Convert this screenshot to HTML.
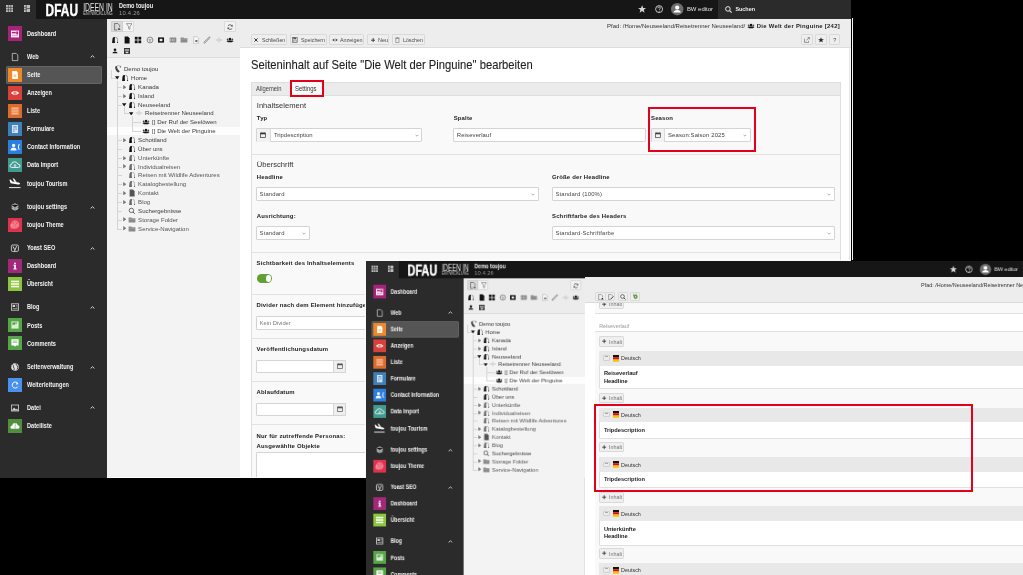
<!DOCTYPE html><html><head><meta charset="utf-8"><style>
*{margin:0;padding:0}
html,body{width:1023px;height:575px;overflow:hidden;background:#000}
body{position:relative;font-family:"Liberation Sans",sans-serif}
.t{position:absolute;white-space:nowrap}
.b{position:absolute;display:block}
.scr{position:absolute;overflow:hidden;will-change:transform}
</style></head><body>
<div class="scr" style="left:0;top:0;width:851px;height:478px"><div class="b" style="left:0.00px;top:0.00px;width:851.00px;height:19.20px;background:#161616"></div>
<div class="b" style="left:0.00px;top:0.00px;width:36.40px;height:19.20px;background:#2b2b2b"></div>
<svg class="b" style="left:5.80px;top:5.20px;" width="7.2" height="7.2" viewBox="0 0 7.2 7.2"><rect x="0" y="0" width="7.2" height="7.2" fill="#bdbdbd"/><path d="M0 2.4H7.2M0 4.8H7.2M2.4 0V7.2M4.8 0V7.2" stroke="#2b2b2b" stroke-width="0.6"/></svg>
<svg class="b" style="left:24.00px;top:5.40px;" width="6.3" height="7" viewBox="0 0 6.3 7"><rect x="0" y="0" width="6.3" height="7" fill="#bdbdbd"/><path d="M2.3 0V7M0 2.3H2.3M0 4.6H2.3M2.3 3.5H6.3" stroke="#2b2b2b" stroke-width="0.6"/></svg>
<svg class="b" style="left:44.50px;top:2.50px;" width="70" height="14" viewBox="0 0 70 14"><text x="0.6" y="12.5" font-family="Liberation Sans" font-weight="700" font-size="16.6" fill="#fff" stroke="#fff" stroke-width="0.45" textLength="32.4" lengthAdjust="spacingAndGlyphs">DFAU</text><text x="38.2" y="7.9" font-family="Liberation Sans" font-weight="400" font-size="10.2" fill="#e0e0e0" textLength="29.5" lengthAdjust="spacingAndGlyphs">IDEEN IN</text><text x="38.2" y="12.3" font-family="Liberation Sans" font-weight="400" font-size="5.1" fill="#cfcfcf" textLength="29.5" lengthAdjust="spacingAndGlyphs">ENTWICKLUNG</text></svg>
<div class="t" style="left:119.00px;top:1.00px;height:10px;line-height:10px;font-size:6.5px;color:#f0f0f0;font-weight:700;transform:scaleX(0.86);transform-origin:0 50%;">Demo toujou</div>
<div class="t" style="left:119.00px;top:7.80px;height:10px;line-height:10px;font-size:5.8px;color:#9a9a9a;font-weight:400;letter-spacing:0.25px;">10.4.26</div>
<div class="b" style="left:718.00px;top:0.00px;width:133.00px;height:18.50px;background:#2b2b2b"></div>
<svg class="b" style="left:638.20px;top:5.30px;" width="8.2" height="8" viewBox="0 0 8.2 8"><path d="M4.1 0.2L5.2 3H8.1L5.8 4.8L6.6 7.7L4.1 6L1.6 7.7L2.4 4.8L0.1 3H3Z" fill="#d6d6d6"/></svg>
<svg class="b" style="left:654.60px;top:5.30px;" width="8.2" height="8.2" viewBox="0 0 8.2 8.2"><circle cx="4.1" cy="4.1" r="3.5" fill="none" stroke="#d6d6d6" stroke-width="0.9"/><path d="M2.8 3.2Q2.9 1.9 4.1 1.9Q5.4 1.9 5.4 3.1Q5.4 3.9 4.3 4.4V5.1" fill="none" stroke="#d6d6d6" stroke-width="0.8"/><circle cx="4.25" cy="6.2" r="0.5" fill="#d6d6d6"/></svg>
<svg class="b" style="left:671.30px;top:3.20px;" width="12.4" height="12.4" viewBox="0 0 12.4 12.4"><circle cx="6.2" cy="6.2" r="6.2" fill="#6e6e6e"/><circle cx="6.2" cy="4.6" r="2.1" fill="#fff"/><path d="M2.6 9.6Q2.8 6.9 6.2 6.9Q9.6 6.9 9.8 9.6Z" fill="#fff"/></svg>
<div class="t" style="left:686.90px;top:4.30px;height:10px;line-height:10px;font-size:5.95px;color:#e4e4e4;font-weight:400;">BW editor</div>
<svg class="b" style="left:725.00px;top:5.70px;" width="7" height="7" viewBox="0 0 7 7"><circle cx="2.9" cy="2.9" r="2.3" fill="none" stroke="#e8e8e8" stroke-width="1"/><path d="M4.6 4.6L6.6 6.6" stroke="#e8e8e8" stroke-width="1.1"/></svg>
<div class="t" style="left:735.40px;top:4.30px;height:10px;line-height:10px;font-size:5.45px;color:#f0f0f0;font-weight:700;">Suchen</div>
<div class="b" style="left:0.00px;top:18.50px;width:107.20px;height:459.50px;background:#2b2b2b"></div>
<div class="b" style="left:5.90px;top:65.90px;width:96.00px;height:18.00px;background:#555;border:0.8px solid #646464;border-radius:1.2px;box-sizing:border-box"></div>
<div class="b" style="left:8.10px;top:26.40px;width:14.20px;height:14.30px;background:#a8217a"></div>
<svg class="b" style="left:8.20px;top:26.60px;" width="14" height="14" viewBox="0 0 14 14"><g transform="translate(7 7)"><rect x="-4" y="-3.4" width="8" height="6.8" fill="#fff"/><rect x="-3.2" y="-2.2" width="4" height="1.6" fill="#a8217a"/><rect x="1.2" y="-2.6" width="2" height="3" fill="#a8217a"/><rect x="-3.2" y="0.6" width="6.4" height="1.6" fill="#e3a9cb"/></g></svg>
<div class="t" style="left:27.20px;top:28.80px;height:10px;line-height:10px;font-size:6.6px;color:#f2f2f2;font-weight:700;transform:scaleX(0.85);transform-origin:0 50%;">Dashboard</div>
<svg class="b" style="left:8.20px;top:49.60px;" width="14" height="14" viewBox="0 0 14 14"><g transform="translate(7 7)"><path d="M-2.7 -3.6H1.2L2.8 -2V3.6H-2.7Z" fill="none" stroke="#e0e0e0" stroke-width="0.7"/></g></svg>
<div class="t" style="left:27.20px;top:51.80px;height:10px;line-height:10px;font-size:6.6px;color:#f2f2f2;font-weight:700;transform:scaleX(0.85);transform-origin:0 50%;">Web</div>
<svg class="b" style="left:90.30px;top:55.30px;" width="5" height="3" viewBox="0 0 5 3"><path d="M0.6 2.5L2.5 0.7L4.4 2.5" fill="none" stroke="#e0e0e0" stroke-width="0.95"/></svg>
<div class="b" style="left:8.10px;top:67.80px;width:14.20px;height:14.30px;background:#f0882a"></div>
<svg class="b" style="left:8.20px;top:68.00px;" width="14" height="14" viewBox="0 0 14 14"><g transform="translate(7 7)"><path d="M-2.8 -3.9H1.4L2.9 -2.4V3.9H-2.8Z" fill="#fff"/><rect x="-1.4" y="-0.4" width="2.6" height="2.4" fill="#f6c7a0"/></g></svg>
<div class="t" style="left:27.20px;top:70.20px;height:10px;line-height:10px;font-size:6.6px;color:#f2f2f2;font-weight:700;transform:scaleX(0.85);transform-origin:0 50%;">Seite</div>
<div class="b" style="left:8.10px;top:85.80px;width:14.20px;height:14.30px;background:#d8403a"></div>
<svg class="b" style="left:8.20px;top:86.00px;" width="14" height="14" viewBox="0 0 14 14"><g transform="translate(7 7)"><path d="M-4.2 0Q0 -4 4.2 0Q0 4 -4.2 0Z" fill="#fff"/><circle cx="0" cy="0" r="1.6" fill="#d8403a"/><circle cx="0" cy="0" r="0.7" fill="#fff"/></g></svg>
<div class="t" style="left:27.20px;top:88.20px;height:10px;line-height:10px;font-size:6.6px;color:#f2f2f2;font-weight:700;transform:scaleX(0.85);transform-origin:0 50%;">Anzeigen</div>
<div class="b" style="left:8.10px;top:103.80px;width:14.20px;height:14.30px;background:#dd6b2e"></div>
<svg class="b" style="left:8.20px;top:104.00px;" width="14" height="14" viewBox="0 0 14 14"><g transform="translate(7 7)"><rect x="-3.6" y="-3.6" width="7.2" height="7.2" fill="#f3b48f"/><path d="M-3.6 -1.2H3.6M-3.6 1.2H3.6" stroke="#dd6b2e" stroke-width="0.6"/></g></svg>
<div class="t" style="left:27.20px;top:106.20px;height:10px;line-height:10px;font-size:6.6px;color:#f2f2f2;font-weight:700;transform:scaleX(0.85);transform-origin:0 50%;">Liste</div>
<div class="b" style="left:8.10px;top:121.80px;width:14.20px;height:14.30px;background:#3f7fba"></div>
<svg class="b" style="left:8.20px;top:122.00px;" width="14" height="14" viewBox="0 0 14 14"><g transform="translate(7 7)"><rect x="-3" y="-4" width="6" height="8" fill="#d5e3f0"/><rect x="-1.8" y="-2.6" width="3.6" height="1" fill="#3f7fba"/><rect x="-1.8" y="-0.4" width="1.4" height="1" fill="#3f7fba"/><rect x="0.4" y="-0.4" width="1.4" height="1" fill="#3f7fba"/><rect x="-1.8" y="1.6" width="1.4" height="1" fill="#3f7fba"/></g></svg>
<div class="t" style="left:27.20px;top:124.20px;height:10px;line-height:10px;font-size:6.6px;color:#f2f2f2;font-weight:700;transform:scaleX(0.85);transform-origin:0 50%;">Formulare</div>
<div class="b" style="left:8.10px;top:139.80px;width:14.20px;height:14.30px;background:#2b7fe0"></div>
<svg class="b" style="left:8.20px;top:140.00px;" width="14" height="14" viewBox="0 0 14 14"><g transform="translate(7 7)"><circle cx="-1.4" cy="-1.6" r="1.6" fill="#fff"/><path d="M-4.4 3.4Q-4.2 0.6 -1.4 0.6Q1.4 0.6 1.6 3.4Z" fill="#fff"/><path d="M4.2 -3Q2.4 0 4.2 3" fill="none" stroke="#fff" stroke-width="1"/></g></svg>
<div class="t" style="left:27.20px;top:142.20px;height:10px;line-height:10px;font-size:6.6px;color:#f2f2f2;font-weight:700;transform:scaleX(0.85);transform-origin:0 50%;">Contact Information</div>
<div class="b" style="left:8.10px;top:158.00px;width:14.20px;height:14.30px;background:#3f9c8f"></div>
<svg class="b" style="left:8.20px;top:158.20px;" width="14" height="14" viewBox="0 0 14 14"><g transform="translate(7 7)"><path d="M-3.6 2.4Q-5 2.4 -5 0.9Q-5 -0.6 -3.4 -0.6Q-3.2 -3.2 -0.4 -3.2Q2 -3.2 2.6 -1Q5 -1 5 0.9Q5 2.4 3.5 2.4Z" fill="none" stroke="#fff" stroke-width="0.9"/><path d="M0 -0.4V2M-1.1 0.7L0 -0.5L1.1 0.7" fill="none" stroke="#fff" stroke-width="0.8"/></g></svg>
<div class="t" style="left:27.20px;top:160.40px;height:10px;line-height:10px;font-size:6.6px;color:#f2f2f2;font-weight:700;transform:scaleX(0.85);transform-origin:0 50%;">Data Import</div>
<svg class="b" style="left:8.20px;top:176.40px;" width="14" height="14" viewBox="0 0 14 14"><g transform="translate(7 7)"><path d="M-6 4.6H5.5" stroke="#fff" stroke-width="0.9"/><path d="M-5.6 -3.2L-4.4 -3.4L-2.6 -1.6L3.6 -0.6Q5.6 0 5 1Q4.6 1.6 3 1.4L-4.4 0.2Z" fill="#fff"/><path d="M-2.4 -4.4L-1 -4.4L1.6 -1L-0.6 -1.2Z" fill="#fff"/></g></svg>
<div class="t" style="left:27.20px;top:178.60px;height:10px;line-height:10px;font-size:6.6px;color:#f2f2f2;font-weight:700;transform:scaleX(0.85);transform-origin:0 50%;">toujou Tourism</div>
<svg class="b" style="left:8.20px;top:199.80px;" width="14" height="14" viewBox="0 0 14 14"><g transform="translate(7 7)"><path d="M0 -3.8L3.3 -1.9V1.9L0 3.8L-3.3 1.9V-1.9Z" fill="#bdbdbd"/><path d="M-3.3 -1.9L0 0L3.3 -1.9M0 0V3.8M-1.6 -2.8L1.6 -1M1.6 -2.8L-1.6 -1M-3.3 0.2L-1.6 1.1M3.3 0.2L1.6 1.1" stroke="#2b2b2b" stroke-width="0.45"/></g></svg>
<div class="t" style="left:27.20px;top:202.00px;height:10px;line-height:10px;font-size:6.6px;color:#f2f2f2;font-weight:700;transform:scaleX(0.85);transform-origin:0 50%;">toujou settings</div>
<svg class="b" style="left:90.30px;top:205.50px;" width="5" height="3" viewBox="0 0 5 3"><path d="M0.6 2.5L2.5 0.7L4.4 2.5" fill="none" stroke="#e0e0e0" stroke-width="0.95"/></svg>
<div class="b" style="left:8.10px;top:217.60px;width:14.20px;height:14.30px;background:#e0324c"></div>
<svg class="b" style="left:8.20px;top:217.80px;" width="14" height="14" viewBox="0 0 14 14"><g transform="translate(7 7)"><path d="M-3.6 1.5Q-4.2 -4 0 -4.1Q4.2 -4 3.6 1.5M-2.6 3Q-3.2 -2.9 0 -3Q3.2 -2.9 2.7 2.6M-1.6 3.7Q-2.2 -1.8 0 -1.9Q2.2 -1.8 1.8 3.4M-0.6 3.9Q-0.9 -0.8 0 -0.8Q0.9 -0.8 0.8 3.6M-4 -0.8Q-4.4 2.8 -3.2 3.6" fill="none" stroke="#f9d0d6" stroke-width="0.55"/></g></svg>
<div class="t" style="left:27.20px;top:220.00px;height:10px;line-height:10px;font-size:6.6px;color:#f2f2f2;font-weight:700;transform:scaleX(0.85);transform-origin:0 50%;">toujou Theme</div>
<svg class="b" style="left:8.20px;top:240.80px;" width="14" height="14" viewBox="0 0 14 14"><g transform="translate(7 7)"><rect x="-3.6" y="-3" width="7" height="6.4" rx="1.2" fill="none" stroke="#e6e6e6" stroke-width="0.8"/><path d="M-2 -1.6L-0.4 1.6M1.6 -1.8L-0.6 3.4" fill="none" stroke="#e6e6e6" stroke-width="0.9"/></g></svg>
<div class="t" style="left:27.20px;top:243.00px;height:10px;line-height:10px;font-size:6.6px;color:#f2f2f2;font-weight:700;transform:scaleX(0.85);transform-origin:0 50%;">Yoast SEO</div>
<svg class="b" style="left:90.30px;top:246.50px;" width="5" height="3" viewBox="0 0 5 3"><path d="M0.6 2.5L2.5 0.7L4.4 2.5" fill="none" stroke="#e0e0e0" stroke-width="0.95"/></svg>
<div class="b" style="left:8.10px;top:259.00px;width:14.20px;height:14.30px;background:#a2287a"></div>
<svg class="b" style="left:8.20px;top:259.20px;" width="14" height="14" viewBox="0 0 14 14"><g transform="translate(7 7)"><circle cx="0" cy="-2.6" r="0.9" fill="#fff"/><path d="M-1.6 -1.2H0.9V2.6H1.6V3.6H-1.6V2.6H-0.8V-0.2H-1.6Z" fill="#fff"/></g></svg>
<div class="t" style="left:27.20px;top:261.40px;height:10px;line-height:10px;font-size:6.6px;color:#f2f2f2;font-weight:700;transform:scaleX(0.85);transform-origin:0 50%;">Dashboard</div>
<div class="b" style="left:8.10px;top:277.00px;width:14.20px;height:14.30px;background:#8cc63f"></div>
<svg class="b" style="left:8.20px;top:277.20px;" width="14" height="14" viewBox="0 0 14 14"><g transform="translate(7 7)"><rect x="-4" y="-3.3" width="8" height="1.5" fill="#fff"/><rect x="-4" y="-0.75" width="8" height="1.5" fill="#fff"/><rect x="-4" y="1.8" width="8" height="1.5" fill="#fff"/></g></svg>
<div class="t" style="left:27.20px;top:279.40px;height:10px;line-height:10px;font-size:6.6px;color:#f2f2f2;font-weight:700;transform:scaleX(0.85);transform-origin:0 50%;">Übersicht</div>
<svg class="b" style="left:8.20px;top:300.20px;" width="14" height="14" viewBox="0 0 14 14"><g transform="translate(7 7)"><rect x="-3.6" y="-3.2" width="7.2" height="6.4" fill="none" stroke="#d6d6d6" stroke-width="0.8"/><rect x="-2.4" y="-2" width="2.4" height="2" fill="#d6d6d6"/><path d="M0.8 -1.6H2.6M0.8 0H2.6M-2.4 1.6H2.6" stroke="#d6d6d6" stroke-width="0.6"/></g></svg>
<div class="t" style="left:27.20px;top:302.40px;height:10px;line-height:10px;font-size:6.6px;color:#f2f2f2;font-weight:700;transform:scaleX(0.85);transform-origin:0 50%;">Blog</div>
<svg class="b" style="left:90.30px;top:305.90px;" width="5" height="3" viewBox="0 0 5 3"><path d="M0.6 2.5L2.5 0.7L4.4 2.5" fill="none" stroke="#e0e0e0" stroke-width="0.95"/></svg>
<div class="b" style="left:8.10px;top:318.20px;width:14.20px;height:14.30px;background:#56a647"></div>
<svg class="b" style="left:8.20px;top:318.40px;" width="14" height="14" viewBox="0 0 14 14"><g transform="translate(7 7)"><rect x="-3.6" y="-3.6" width="7.2" height="7.2" fill="#d8edd3"/><rect x="-2.6" y="-2.6" width="2.6" height="2.4" fill="#56a647"/><path d="M1 -3.2V-0.8M-0.2 -2H2.2" stroke="#56a647" stroke-width="0.7"/></g></svg>
<div class="t" style="left:27.20px;top:320.60px;height:10px;line-height:10px;font-size:6.6px;color:#f2f2f2;font-weight:700;transform:scaleX(0.85);transform-origin:0 50%;">Posts</div>
<div class="b" style="left:8.10px;top:336.20px;width:14.20px;height:14.30px;background:#56a647"></div>
<svg class="b" style="left:8.20px;top:336.40px;" width="14" height="14" viewBox="0 0 14 14"><g transform="translate(7 7)"><path d="M-3.6 -3.8H3.6V2.4H1L0 3.8L-1 2.4H-3.6Z" fill="#fff"/><path d="M-2.2 -2H2.2M-2.2 -0.6H2.2" stroke="#56a647" stroke-width="0.6"/></g></svg>
<div class="t" style="left:27.20px;top:338.60px;height:10px;line-height:10px;font-size:6.6px;color:#f2f2f2;font-weight:700;transform:scaleX(0.85);transform-origin:0 50%;">Comments</div>
<svg class="b" style="left:8.20px;top:359.80px;" width="14" height="14" viewBox="0 0 14 14"><g transform="translate(7 7)"><circle cx="0" cy="0" r="3.8" fill="#e0e0e0"/><path d="M-2.6 -2.8Q-1 -1.6 -1.6 0Q-0.4 1 -1 3.4M1.2 -3.6Q0.6 -1.6 2.4 -1.2Q3.4 0.6 2 2.6" fill="none" stroke="#2b2b2b" stroke-width="0.8"/></g></svg>
<div class="t" style="left:27.20px;top:362.00px;height:10px;line-height:10px;font-size:6.6px;color:#f2f2f2;font-weight:700;transform:scaleX(0.85);transform-origin:0 50%;">Seitenverwaltung</div>
<svg class="b" style="left:90.30px;top:365.50px;" width="5" height="3" viewBox="0 0 5 3"><path d="M0.6 2.5L2.5 0.7L4.4 2.5" fill="none" stroke="#e0e0e0" stroke-width="0.95"/></svg>
<div class="b" style="left:8.10px;top:377.60px;width:14.20px;height:14.30px;background:#4a90ee"></div>
<svg class="b" style="left:8.20px;top:377.80px;" width="14" height="14" viewBox="0 0 14 14"><g transform="translate(7 7)"><path d="M2.6 -1.8A3 3 0 1 0 2.8 1.6" fill="none" stroke="#fff" stroke-width="1"/><path d="M1.4 -3.2L3.4 -1.2L1.4 0Z" fill="#fff"/></g></svg>
<div class="t" style="left:27.20px;top:380.00px;height:10px;line-height:10px;font-size:6.6px;color:#f2f2f2;font-weight:700;transform:scaleX(0.85);transform-origin:0 50%;">Weiterleitungen</div>
<svg class="b" style="left:8.20px;top:400.70px;" width="14" height="14" viewBox="0 0 14 14"><g transform="translate(7 7)"><rect x="-3.6" y="-3" width="7.2" height="6" fill="none" stroke="#d6d6d6" stroke-width="0.8"/><path d="M-3.2 2.6L-1 -0.6L1 1.4L2 0.4L3.2 2.6Z" fill="#d6d6d6"/></g></svg>
<div class="t" style="left:27.20px;top:402.90px;height:10px;line-height:10px;font-size:6.6px;color:#f2f2f2;font-weight:700;transform:scaleX(0.85);transform-origin:0 50%;">Datei</div>
<svg class="b" style="left:90.30px;top:406.40px;" width="5" height="3" viewBox="0 0 5 3"><path d="M0.6 2.5L2.5 0.7L4.4 2.5" fill="none" stroke="#e0e0e0" stroke-width="0.95"/></svg>
<div class="b" style="left:8.10px;top:418.60px;width:14.20px;height:14.30px;background:#4f8f3e"></div>
<svg class="b" style="left:8.20px;top:418.80px;" width="14" height="14" viewBox="0 0 14 14"><g transform="translate(7 7)"><path d="M-3.2 2.8Q-4.6 2.8 -4.6 1.2Q-4.6 -0.6 -2.8 -0.6Q-2.4 -3 0 -3Q2.4 -3 2.8 -0.8Q4.6 -0.8 4.6 1Q4.6 2.8 3 2.8Z" fill="#fff"/><path d="M0.2 -3V2.8" stroke="#4f8f3e" stroke-width="0.5"/></g></svg>
<div class="t" style="left:27.20px;top:421.00px;height:10px;line-height:10px;font-size:6.6px;color:#f2f2f2;font-weight:700;transform:scaleX(0.85);transform-origin:0 50%;">Dateiliste</div>
<div class="b" style="left:107.00px;top:18.50px;width:133.00px;height:459.50px;background:#f3f3f3"></div>
<div class="b" style="left:107.00px;top:18.50px;width:133.00px;height:39.70px;background:#ececec;border-bottom:0.9px solid #dcdcdc;box-sizing:border-box"></div>
<div class="b" style="left:111.30px;top:20.80px;width:22.70px;height:11.60px;background:#f4f4f4;border:0.8px solid #dadada;border-radius:1px;box-sizing:border-box"></div>
<div class="b" style="left:111.30px;top:20.80px;width:11.70px;height:11.60px;background:#d9d9d9;border:0.8px solid #cdcdcd;border-radius:1px;box-sizing:border-box"></div>
<svg class="b" style="left:114.00px;top:23.00px;" width="7" height="7.5" viewBox="0 0 7 7.5"><path d="M0.6 0.5H3.8L5.6 2.3V4.2M3 7H0.6V0.5" fill="none" stroke="#555" stroke-width="0.7"/><path d="M3.5 6.8L5 4.8L6.6 6.8Z" fill="#333"/></svg>
<svg class="b" style="left:125.60px;top:23.30px;" width="6.5" height="7" viewBox="0 0 6.5 7"><path d="M0.4 0.6H6.1L3.9 3.6V6.4L2.6 5.6V3.6Z" fill="none" stroke="#666" stroke-width="0.6"/></svg>
<div class="b" style="left:224.00px;top:21.00px;width:11.70px;height:11.20px;background:#f2f2f2;border:0.8px solid #dadada;border-radius:1px;box-sizing:border-box"></div>
<svg class="b" style="left:226.80px;top:23.60px;" width="6.2" height="6.2" viewBox="0 0 6.2 6.2"><path d="M5.3 2.2A2.5 2.5 0 0 0 0.9 2M0.9 4A2.5 2.5 0 0 0 5.3 4.2" fill="none" stroke="#444" stroke-width="0.8"/><path d="M5.6 0.6V2.6H3.6ZM0.6 5.6V3.6H2.6Z" fill="#444"/></svg>
<svg class="b" style="left:110.70px;top:36.20px;" width="8" height="8" viewBox="0 0 8 8"><g transform="translate(4 4)"><path d="M-2.9 2.9L-2.5 -1.2Q-2.3 -2.9 -0.9 -2.9H-0.1V-0.6L-0.6 0L-0.1 0.6V2.9Z" fill="#111"/><path d="M0.5 -2.7Q2.4 -2.7 2.5 -0.6V2.3" fill="none" stroke="#777" stroke-width="0.7"/><circle cx="2.5" cy="2.4" r="0.6" fill="#333"/></g></svg>
<svg class="b" style="left:122.60px;top:36.20px;" width="8" height="8" viewBox="0 0 8 8"><g transform="translate(4 4)"><path d="M-2.4 -3.4H1L2.6 -1.8V3.4H-2.4Z" fill="#111"/></g></svg>
<svg class="b" style="left:133.90px;top:36.20px;" width="8" height="8" viewBox="0 0 8 8"><g transform="translate(4 4)"><rect x="-3.2" y="-3.2" width="2.8" height="2.8" fill="#111"/><rect x="0.4" y="-3.2" width="2.8" height="2.8" fill="#111"/><rect x="-3.2" y="0.4" width="2.8" height="2.8" fill="#111"/><rect x="0.4" y="0.4" width="2.8" height="2.8" fill="#111"/></g></svg>
<svg class="b" style="left:145.50px;top:36.20px;" width="8" height="8" viewBox="0 0 8 8"><g transform="translate(4 4)"><circle cx="0" cy="0" r="2.9" fill="none" stroke="#666" stroke-width="0.7"/><path d="M-1.5 -0.8L0 0L1.5 -0.8M0 0V2" fill="none" stroke="#666" stroke-width="0.6"/></g></svg>
<svg class="b" style="left:156.70px;top:36.20px;" width="8" height="8" viewBox="0 0 8 8"><g transform="translate(4 4)"><rect x="-3" y="-2.6" width="6" height="5.2" fill="#111"/><rect x="-1.4" y="-1.2" width="2.8" height="2.4" fill="#eee"/></g></svg>
<svg class="b" style="left:168.50px;top:36.20px;" width="8" height="8" viewBox="0 0 8 8"><g transform="translate(4 4)"><rect x="-3.3" y="-2.4" width="6.6" height="4.8" rx="0.6" fill="#8a8a8a"/><path d="M-2.4 -1.2V1.2M-0.6 -1.2V1.2M1 -1.2V1.2" stroke="#eee" stroke-width="0.5"/></g></svg>
<svg class="b" style="left:180.00px;top:36.20px;" width="8" height="8" viewBox="0 0 8 8"><g transform="translate(4 4)"><path d="M-3.4 -2.6H-0.6L0.2 -1.8H3.4V2.6H-3.4Z" fill="#8a8a8a"/><path d="M-3.4 -0.8H3.4" stroke="#bbb" stroke-width="0.4"/></g></svg>
<svg class="b" style="left:192.00px;top:36.20px;" width="8" height="8" viewBox="0 0 8 8"><g transform="translate(4 4)"><path d="M-2.4 -3.4H1L2.6 -1.8V3.4H-2.4Z" fill="#f6f6f6" stroke="#aaa" stroke-width="0.5"/><rect x="-0.6" y="0" width="2" height="2" fill="#666"/></g></svg>
<svg class="b" style="left:203.00px;top:36.20px;" width="8" height="8" viewBox="0 0 8 8"><g transform="translate(4 4)"><path d="M-2.6 2.6L2.6 -2.6" stroke="#888" stroke-width="1.6" stroke-linecap="round"/><path d="M-2.6 2.6L2.6 -2.6" stroke="#eee" stroke-width="0.6"/></g></svg>
<svg class="b" style="left:214.50px;top:36.20px;" width="8" height="8" viewBox="0 0 8 8"><g transform="translate(4 4)"><path d="M-3.2 0H3.2M0 -2.4V-0.8M0 0.8V2.4" stroke="#aaa" stroke-width="0.6"/></g></svg>
<svg class="b" style="left:226.00px;top:36.20px;" width="8" height="8" viewBox="0 0 8 8"><g transform="translate(4 4)"><circle cx="-2.3" cy="-0.5" r="0.95" fill="#444"/><circle cx="2.3" cy="-0.5" r="0.95" fill="#444"/><path d="M-3.4 1.9Q-3.3 0.5 -2 0.5H2Q3.3 0.5 3.4 1.9Z" fill="#444"/><circle cx="0" cy="-1.1" r="1.2" fill="#111"/><path d="M-2.2 2.3Q-2 0.4 0 0.4Q2 0.4 2.2 2.3Z" fill="#111"/></g></svg>
<svg class="b" style="left:110.70px;top:47.40px;" width="8" height="8" viewBox="0 0 8 8"><g transform="translate(4 4)"><circle cx="0" cy="-1.2" r="1.3" fill="#111"/><path d="M-2.6 2.2Q-2.4 0.4 0 0.4Q2.4 0.4 2.6 2.2Z" fill="#111"/></g></svg>
<svg class="b" style="left:122.60px;top:47.40px;" width="8" height="8" viewBox="0 0 8 8"><g transform="translate(4 4)"><rect x="-3" y="-3" width="6" height="6" fill="#333"/><rect x="-2.2" y="-1.6" width="4.4" height="1.2" fill="#ddd"/><rect x="-1.4" y="0.6" width="2.8" height="1.6" fill="#ddd"/></g></svg>
<div class="b" style="left:107.00px;top:126.80px;width:133.00px;height:8.40px;background:#fdfdfd"></div>
<div class="b" style="left:111.20px;top:69.50px;width:0.70px;height:8.80px;background:#d4d4d4"></div>
<div class="b" style="left:111.20px;top:78.30px;width:4.80px;height:0.70px;background:#d4d4d4"></div>
<div class="b" style="left:117.30px;top:81.00px;width:0.70px;height:147.50px;background:#d4d4d4"></div>
<div class="b" style="left:117.30px;top:86.90px;width:4.70px;height:0.70px;background:#d4d4d4"></div>
<div class="b" style="left:117.30px;top:95.75px;width:4.70px;height:0.70px;background:#d4d4d4"></div>
<div class="b" style="left:117.30px;top:104.60px;width:4.70px;height:0.70px;background:#d4d4d4"></div>
<div class="b" style="left:117.30px;top:140.00px;width:4.70px;height:0.70px;background:#d4d4d4"></div>
<div class="b" style="left:117.30px;top:148.85px;width:4.70px;height:0.70px;background:#d4d4d4"></div>
<div class="b" style="left:117.30px;top:157.70px;width:4.70px;height:0.70px;background:#d4d4d4"></div>
<div class="b" style="left:117.30px;top:166.55px;width:4.70px;height:0.70px;background:#d4d4d4"></div>
<div class="b" style="left:117.30px;top:175.40px;width:4.70px;height:0.70px;background:#d4d4d4"></div>
<div class="b" style="left:117.30px;top:184.25px;width:4.70px;height:0.70px;background:#d4d4d4"></div>
<div class="b" style="left:117.30px;top:193.10px;width:4.70px;height:0.70px;background:#d4d4d4"></div>
<div class="b" style="left:117.30px;top:201.95px;width:4.70px;height:0.70px;background:#d4d4d4"></div>
<div class="b" style="left:117.30px;top:210.80px;width:4.70px;height:0.70px;background:#d4d4d4"></div>
<div class="b" style="left:117.30px;top:219.65px;width:4.70px;height:0.70px;background:#d4d4d4"></div>
<div class="b" style="left:117.30px;top:228.50px;width:4.70px;height:0.70px;background:#d4d4d4"></div>
<div class="b" style="left:124.40px;top:107.00px;width:0.70px;height:6.45px;background:#d4d4d4"></div>
<div class="b" style="left:124.40px;top:113.45px;width:5.10px;height:0.70px;background:#d4d4d4"></div>
<div class="b" style="left:131.80px;top:116.00px;width:0.70px;height:15.15px;background:#d4d4d4"></div>
<div class="b" style="left:131.80px;top:122.30px;width:9.20px;height:0.70px;background:#d4d4d4"></div>
<div class="b" style="left:131.80px;top:131.15px;width:9.20px;height:0.70px;background:#d4d4d4"></div>
<svg class="b" style="left:113.50px;top:65.20px;" width="8" height="8" viewBox="0 0 8 8"><g transform="translate(4 4)"><path d="M1.6 -3.6Q-0.8 -3.6 -2.8 -2.6Q-3.2 1.2 0.2 3.6Q1 3.4 1.8 2.6Q-0.8 0.2 -1.2 -2.6Q0.2 -3 1.6 -3.6Z" fill="#444"/><path d="M1.6 -3.4Q2.8 -3.2 2.8 -2.2Q2.8 -1.4 2 -1.2Z" fill="#444"/></g></svg>
<div class="t" style="left:124.00px;top:64.20px;height:10px;line-height:10px;font-size:6.05px;color:#333;font-weight:400;">Demo toujou</div>
<svg class="b" style="left:115.30px;top:76.25px;" width="4.4" height="3.8" viewBox="0 0 4.4 3.8"><path d="M0 0.2H4.4L2.2 3.6Z" fill="#111"/></svg>
<svg class="b" style="left:120.80px;top:74.05px;" width="8" height="8" viewBox="0 0 8 8"><g transform="translate(4 4)"><path d="M-2.9 2.9L-2.5 -1.2Q-2.3 -2.9 -0.9 -2.9H-0.1V-0.6L-0.6 0L-0.1 0.6V2.9Z" fill="#111"/><path d="M0.5 -2.7Q2.4 -2.7 2.5 -0.6V2.3" fill="none" stroke="#777" stroke-width="0.7"/><circle cx="2.5" cy="2.4" r="0.6" fill="#333"/></g></svg>
<div class="t" style="left:131.10px;top:73.05px;height:10px;line-height:10px;font-size:6.05px;color:#3a3a3a;font-weight:400;">Home</div>
<svg class="b" style="left:122.90px;top:84.70px;" width="3.6" height="4.4" viewBox="0 0 3.6 4.4"><path d="M0.2 0L3.4 2.2L0.2 4.4Z" fill="#777"/></svg>
<svg class="b" style="left:127.80px;top:82.90px;" width="8" height="8" viewBox="0 0 8 8"><g transform="translate(4 4)"><path d="M-2.9 2.9L-2.5 -1.2Q-2.3 -2.9 -0.9 -2.9H-0.1V-0.6L-0.6 0L-0.1 0.6V2.9Z" fill="#111"/><path d="M0.5 -2.7Q2.4 -2.7 2.5 -0.6V2.3" fill="none" stroke="#777" stroke-width="0.7"/><circle cx="2.5" cy="2.4" r="0.6" fill="#333"/></g></svg>
<div class="t" style="left:138.10px;top:81.90px;height:10px;line-height:10px;font-size:6.05px;color:#3a3a3a;font-weight:400;">Kanada</div>
<svg class="b" style="left:122.90px;top:93.55px;" width="3.6" height="4.4" viewBox="0 0 3.6 4.4"><path d="M0.2 0L3.4 2.2L0.2 4.4Z" fill="#777"/></svg>
<svg class="b" style="left:127.80px;top:91.75px;" width="8" height="8" viewBox="0 0 8 8"><g transform="translate(4 4)"><path d="M-2.9 2.9L-2.5 -1.2Q-2.3 -2.9 -0.9 -2.9H-0.1V-0.6L-0.6 0L-0.1 0.6V2.9Z" fill="#111"/><path d="M0.5 -2.7Q2.4 -2.7 2.5 -0.6V2.3" fill="none" stroke="#777" stroke-width="0.7"/><circle cx="2.5" cy="2.4" r="0.6" fill="#333"/></g></svg>
<div class="t" style="left:138.10px;top:90.75px;height:10px;line-height:10px;font-size:6.05px;color:#3a3a3a;font-weight:400;">Island</div>
<svg class="b" style="left:122.30px;top:102.80px;" width="4.4" height="3.8" viewBox="0 0 4.4 3.8"><path d="M0 0.2H4.4L2.2 3.6Z" fill="#111"/></svg>
<svg class="b" style="left:127.80px;top:100.60px;" width="8" height="8" viewBox="0 0 8 8"><g transform="translate(4 4)"><path d="M-2.9 2.9L-2.5 -1.2Q-2.3 -2.9 -0.9 -2.9H-0.1V-0.6L-0.6 0L-0.1 0.6V2.9Z" fill="#111"/><path d="M0.5 -2.7Q2.4 -2.7 2.5 -0.6V2.3" fill="none" stroke="#777" stroke-width="0.7"/><circle cx="2.5" cy="2.4" r="0.6" fill="#333"/></g></svg>
<div class="t" style="left:138.10px;top:99.60px;height:10px;line-height:10px;font-size:6.05px;color:#3a3a3a;font-weight:400;">Neuseeland</div>
<svg class="b" style="left:129.30px;top:111.65px;" width="4.4" height="3.8" viewBox="0 0 4.4 3.8"><path d="M0 0.2H4.4L2.2 3.6Z" fill="#111"/></svg>
<svg class="b" style="left:134.80px;top:109.45px;" width="8" height="8" viewBox="0 0 8 8"><g transform="translate(4 4)"><path d="M-3.2 0H3.2M0 -2.4V-0.8M0 0.8V2.4" stroke="#aaa" stroke-width="0.6"/></g></svg>
<div class="t" style="left:145.10px;top:108.45px;height:10px;line-height:10px;font-size:6.05px;color:#3a3a3a;font-weight:400;">Reisetrenner Neuseeland</div>
<svg class="b" style="left:141.80px;top:118.30px;" width="8" height="8" viewBox="0 0 8 8"><g transform="translate(4 4)"><circle cx="-2.3" cy="-0.5" r="0.95" fill="#444"/><circle cx="2.3" cy="-0.5" r="0.95" fill="#444"/><path d="M-3.4 1.9Q-3.3 0.5 -2 0.5H2Q3.3 0.5 3.4 1.9Z" fill="#444"/><circle cx="0" cy="-1.1" r="1.2" fill="#111"/><path d="M-2.2 2.3Q-2 0.4 0 0.4Q2 0.4 2.2 2.3Z" fill="#111"/></g></svg>
<div class="t" style="left:152.10px;top:117.30px;height:10px;line-height:10px;font-size:6.05px;color:#3a3a3a;font-weight:400;">[] Der Ruf der Seelöwen</div>
<svg class="b" style="left:141.80px;top:127.15px;" width="8" height="8" viewBox="0 0 8 8"><g transform="translate(4 4)"><circle cx="-2.3" cy="-0.5" r="0.95" fill="#444"/><circle cx="2.3" cy="-0.5" r="0.95" fill="#444"/><path d="M-3.4 1.9Q-3.3 0.5 -2 0.5H2Q3.3 0.5 3.4 1.9Z" fill="#444"/><circle cx="0" cy="-1.1" r="1.2" fill="#111"/><path d="M-2.2 2.3Q-2 0.4 0 0.4Q2 0.4 2.2 2.3Z" fill="#111"/></g></svg>
<div class="t" style="left:152.10px;top:126.15px;height:10px;line-height:10px;font-size:6.05px;color:#3a3a3a;font-weight:400;">[] Die Welt der Pinguine</div>
<svg class="b" style="left:122.90px;top:137.80px;" width="3.6" height="4.4" viewBox="0 0 3.6 4.4"><path d="M0.2 0L3.4 2.2L0.2 4.4Z" fill="#777"/></svg>
<svg class="b" style="left:127.80px;top:136.00px;" width="8" height="8" viewBox="0 0 8 8"><g transform="translate(4 4)"><path d="M-2.9 2.9L-2.5 -1.2Q-2.3 -2.9 -0.9 -2.9H-0.1V-0.6L-0.6 0L-0.1 0.6V2.9Z" fill="#111"/><path d="M0.5 -2.7Q2.4 -2.7 2.5 -0.6V2.3" fill="none" stroke="#777" stroke-width="0.7"/><circle cx="2.5" cy="2.4" r="0.6" fill="#333"/></g></svg>
<div class="t" style="left:138.10px;top:135.00px;height:10px;line-height:10px;font-size:6.05px;color:#3a3a3a;font-weight:400;">Schottland</div>
<svg class="b" style="left:127.80px;top:144.85px;" width="8" height="8" viewBox="0 0 8 8"><g transform="translate(4 4)"><path d="M-2.9 2.9L-2.5 -1.2Q-2.3 -2.9 -0.9 -2.9H-0.1V-0.6L-0.6 0L-0.1 0.6V2.9Z" fill="#111"/><path d="M0.5 -2.7Q2.4 -2.7 2.5 -0.6V2.3" fill="none" stroke="#777" stroke-width="0.7"/><circle cx="2.5" cy="2.4" r="0.6" fill="#333"/></g></svg>
<div class="t" style="left:138.10px;top:143.85px;height:10px;line-height:10px;font-size:6.05px;color:#3a3a3a;font-weight:400;">Über uns</div>
<svg class="b" style="left:122.90px;top:155.50px;" width="3.6" height="4.4" viewBox="0 0 3.6 4.4"><path d="M0.2 0L3.4 2.2L0.2 4.4Z" fill="#777"/></svg>
<svg class="b" style="left:127.80px;top:153.70px;" width="8" height="8" viewBox="0 0 8 8"><g transform="translate(4 4)"><path d="M-2.9 2.9L-2.5 -1.2Q-2.3 -2.9 -0.9 -2.9H-0.1V-0.6L-0.6 0L-0.1 0.6V2.9Z" fill="#6a6a6a"/><path d="M0.5 -2.7Q2.4 -2.7 2.5 -0.6V2.3" fill="none" stroke="#999" stroke-width="0.7"/><circle cx="2.5" cy="2.4" r="0.6" fill="#666"/></g></svg>
<div class="t" style="left:138.10px;top:152.70px;height:10px;line-height:10px;font-size:6.05px;color:#555;font-weight:400;">Unterkünfte</div>
<svg class="b" style="left:122.90px;top:164.35px;" width="3.6" height="4.4" viewBox="0 0 3.6 4.4"><path d="M0.2 0L3.4 2.2L0.2 4.4Z" fill="#777"/></svg>
<svg class="b" style="left:127.80px;top:162.55px;" width="8" height="8" viewBox="0 0 8 8"><g transform="translate(4 4)"><path d="M-2.9 2.9L-2.5 -1.2Q-2.3 -2.9 -0.9 -2.9H-0.1V-0.6L-0.6 0L-0.1 0.6V2.9Z" fill="#6a6a6a"/><path d="M0.5 -2.7Q2.4 -2.7 2.5 -0.6V2.3" fill="none" stroke="#999" stroke-width="0.7"/><circle cx="2.5" cy="2.4" r="0.6" fill="#666"/></g></svg>
<div class="t" style="left:138.10px;top:161.55px;height:10px;line-height:10px;font-size:6.05px;color:#555;font-weight:400;">Individualreisen</div>
<svg class="b" style="left:127.80px;top:171.40px;" width="8" height="8" viewBox="0 0 8 8"><g transform="translate(4 4)"><path d="M-2.9 2.9L-2.5 -1.2Q-2.3 -2.9 -0.9 -2.9H-0.1V-0.6L-0.6 0L-0.1 0.6V2.9Z" fill="#6a6a6a"/><path d="M0.5 -2.7Q2.4 -2.7 2.5 -0.6V2.3" fill="none" stroke="#999" stroke-width="0.7"/><circle cx="2.5" cy="2.4" r="0.6" fill="#666"/></g></svg>
<div class="t" style="left:138.10px;top:170.40px;height:10px;line-height:10px;font-size:6.05px;color:#555;font-weight:400;">Reisen mit Wildlife Adventures</div>
<svg class="b" style="left:122.90px;top:182.05px;" width="3.6" height="4.4" viewBox="0 0 3.6 4.4"><path d="M0.2 0L3.4 2.2L0.2 4.4Z" fill="#777"/></svg>
<svg class="b" style="left:127.80px;top:180.25px;" width="8" height="8" viewBox="0 0 8 8"><g transform="translate(4 4)"><path d="M-2.9 2.9L-2.5 -1.2Q-2.3 -2.9 -0.9 -2.9H-0.1V-0.6L-0.6 0L-0.1 0.6V2.9Z" fill="#6a6a6a"/><path d="M0.5 -2.7Q2.4 -2.7 2.5 -0.6V2.3" fill="none" stroke="#999" stroke-width="0.7"/><circle cx="2.5" cy="2.4" r="0.6" fill="#666"/></g></svg>
<div class="t" style="left:138.10px;top:179.25px;height:10px;line-height:10px;font-size:6.05px;color:#555;font-weight:400;">Katalogbestellung</div>
<svg class="b" style="left:122.90px;top:190.90px;" width="3.6" height="4.4" viewBox="0 0 3.6 4.4"><path d="M0.2 0L3.4 2.2L0.2 4.4Z" fill="#777"/></svg>
<svg class="b" style="left:127.80px;top:189.10px;" width="8" height="8" viewBox="0 0 8 8"><g transform="translate(4 4)"><path d="M-2.4 -3.4H1L2.6 -1.8V3.4H-2.4Z" fill="#555"/></g></svg>
<div class="t" style="left:138.10px;top:188.10px;height:10px;line-height:10px;font-size:6.05px;color:#555;font-weight:400;">Kontakt</div>
<svg class="b" style="left:122.90px;top:199.75px;" width="3.6" height="4.4" viewBox="0 0 3.6 4.4"><path d="M0.2 0L3.4 2.2L0.2 4.4Z" fill="#777"/></svg>
<svg class="b" style="left:127.80px;top:197.95px;" width="8" height="8" viewBox="0 0 8 8"><g transform="translate(4 4)"><path d="M-2.9 2.9L-2.5 -1.2Q-2.3 -2.9 -0.9 -2.9H-0.1V-0.6L-0.6 0L-0.1 0.6V2.9Z" fill="#6a6a6a"/><path d="M0.5 -2.7Q2.4 -2.7 2.5 -0.6V2.3" fill="none" stroke="#999" stroke-width="0.7"/><circle cx="2.5" cy="2.4" r="0.6" fill="#666"/></g></svg>
<div class="t" style="left:138.10px;top:196.95px;height:10px;line-height:10px;font-size:6.05px;color:#555;font-weight:400;">Blog</div>
<svg class="b" style="left:127.80px;top:206.80px;" width="8" height="8" viewBox="0 0 8 8"><g transform="translate(4 4)"><circle cx="-0.6" cy="-0.6" r="2.2" fill="none" stroke="#333" stroke-width="0.7"/><path d="M1 1L2.8 2.8" stroke="#333" stroke-width="0.8"/></g></svg>
<div class="t" style="left:138.10px;top:205.80px;height:10px;line-height:10px;font-size:6.05px;color:#3a3a3a;font-weight:400;">Suchergebnisse</div>
<svg class="b" style="left:122.90px;top:217.45px;" width="3.6" height="4.4" viewBox="0 0 3.6 4.4"><path d="M0.2 0L3.4 2.2L0.2 4.4Z" fill="#777"/></svg>
<svg class="b" style="left:127.80px;top:215.65px;" width="8" height="8" viewBox="0 0 8 8"><g transform="translate(4 4)"><path d="M-3.4 -2.6H-0.6L0.2 -1.8H3.4V2.6H-3.4Z" fill="#8a8a8a"/><path d="M-3.4 -0.8H3.4" stroke="#bbb" stroke-width="0.4"/></g></svg>
<div class="t" style="left:138.10px;top:214.65px;height:10px;line-height:10px;font-size:6.05px;color:#555;font-weight:400;">Storage Folder</div>
<svg class="b" style="left:122.90px;top:226.30px;" width="3.6" height="4.4" viewBox="0 0 3.6 4.4"><path d="M0.2 0L3.4 2.2L0.2 4.4Z" fill="#777"/></svg>
<svg class="b" style="left:127.80px;top:224.50px;" width="8" height="8" viewBox="0 0 8 8"><g transform="translate(4 4)"><path d="M-3.4 -2.6H-0.6L0.2 -1.8H3.4V2.6H-3.4Z" fill="#8a8a8a"/><path d="M-3.4 -0.8H3.4" stroke="#bbb" stroke-width="0.4"/></g></svg>
<div class="t" style="left:138.10px;top:223.50px;height:10px;line-height:10px;font-size:6.05px;color:#555;font-weight:400;">Service-Navigation</div><div class="b" style="left:240.00px;top:18.50px;width:611.00px;height:459.50px;background:#fff"></div>
<div class="b" style="left:240.00px;top:18.50px;width:611.00px;height:29.60px;background:#ededed;border-bottom:0.9px solid #dcdcdc;box-sizing:border-box"></div>
<div class="t" style="left:607.10px;top:21.40px;height:10px;line-height:10px;font-size:5.99px;color:#333;font-weight:400;">Pfad: /Home/Neuseeland/Reisetrenner Neuseeland/</div>
<svg class="b" style="left:747.30px;top:22.30px;" width="8" height="8" viewBox="0 0 8 8"><g transform="translate(4 4)"><circle cx="-2.3" cy="-0.5" r="0.95" fill="#444"/><circle cx="2.3" cy="-0.5" r="0.95" fill="#444"/><path d="M-3.4 1.9Q-3.3 0.5 -2 0.5H2Q3.3 0.5 3.4 1.9Z" fill="#444"/><circle cx="0" cy="-1.1" r="1.2" fill="#111"/><path d="M-2.2 2.3Q-2 0.4 0 0.4Q2 0.4 2.2 2.3Z" fill="#111"/></g></svg>
<div class="t" style="left:756.80px;top:21.40px;height:10px;line-height:10px;font-size:5.9px;color:#222;font-weight:700;letter-spacing:0.27px;">Die Welt der Pinguine [242]</div>
<div class="b" style="left:250.60px;top:34.20px;width:36.60px;height:11.30px;background:#eeeeee;border:0.9px solid #d9d9d9;border-radius:1.2px;box-sizing:border-box"></div>
<div class="t" style="left:261.70px;top:35.00px;height:10px;line-height:10px;font-size:6.0px;color:#4a4a4a;font-weight:400;transform:scaleX(0.87);transform-origin:0 50%;">Schließen</div>
<svg class="b" style="left:254.20px;top:38.00px;" width="4" height="4" viewBox="0 0 4 4"><path d="M0.4 0.4L3.6 3.6M3.6 0.4L0.4 3.6" stroke="#222" stroke-width="0.9"/></svg>
<div class="b" style="left:289.50px;top:34.20px;width:37.30px;height:11.30px;background:#eeeeee;border:0.9px solid #d9d9d9;border-radius:1.2px;box-sizing:border-box"></div>
<div class="t" style="left:300.90px;top:35.00px;height:10px;line-height:10px;font-size:6.0px;color:#4a4a4a;font-weight:400;transform:scaleX(0.892);transform-origin:0 50%;">Speichern</div>
<svg class="b" style="left:292.30px;top:36.90px;" width="5.6" height="6" viewBox="0 0 5.6 6"><rect x="0.4" y="0.4" width="4.8" height="5.2" fill="none" stroke="#555" stroke-width="0.6"/><rect x="1.2" y="0.5" width="3" height="1.8" fill="#555"/><rect x="1.2" y="3.4" width="3.2" height="1.6" fill="none" stroke="#777" stroke-width="0.4"/></svg>
<div class="b" style="left:329.40px;top:34.20px;width:35.00px;height:11.30px;background:#eeeeee;border:0.9px solid #d9d9d9;border-radius:1.2px;box-sizing:border-box"></div>
<div class="t" style="left:340.30px;top:35.00px;height:10px;line-height:10px;font-size:6.0px;color:#4a4a4a;font-weight:400;transform:scaleX(0.895);transform-origin:0 50%;">Anzeigen</div>
<svg class="b" style="left:332.00px;top:38.00px;" width="6" height="4" viewBox="0 0 6 4"><path d="M0.2 2Q3 -0.6 5.8 2Q3 4.6 0.2 2Z" fill="#444"/><circle cx="3" cy="2" r="0.9" fill="#eee"/></svg>
<div class="b" style="left:367.20px;top:34.20px;width:22.30px;height:11.30px;background:#eeeeee;border:0.9px solid #d9d9d9;border-radius:1.2px;box-sizing:border-box"></div>
<div class="t" style="left:377.80px;top:35.00px;height:10px;line-height:10px;font-size:6.0px;color:#4a4a4a;font-weight:400;transform:scaleX(0.909);transform-origin:0 50%;">Neu</div>
<svg class="b" style="left:370.60px;top:37.80px;" width="4.4" height="4.4" viewBox="0 0 4.4 4.4"><path d="M2.2 0V4.4M0 2.2H4.4" stroke="#222" stroke-width="0.8"/></svg>
<div class="b" style="left:392.00px;top:34.20px;width:32.60px;height:11.30px;background:#eeeeee;border:0.9px solid #d9d9d9;border-radius:1.2px;box-sizing:border-box"></div>
<div class="t" style="left:402.60px;top:35.00px;height:10px;line-height:10px;font-size:6.0px;color:#4a4a4a;font-weight:400;transform:scaleX(0.877);transform-origin:0 50%;">Löschen</div>
<svg class="b" style="left:395.20px;top:37.00px;" width="4.8" height="6" viewBox="0 0 4.8 6"><path d="M0.8 1.4H4V5.6H0.8Z" fill="none" stroke="#666" stroke-width="0.55"/><path d="M0.2 1H4.6M1.8 0.4H3" stroke="#666" stroke-width="0.55"/></svg>
<div class="b" style="left:801.40px;top:34.10px;width:11.30px;height:11.40px;background:#eeeeee;border:0.9px solid #d9d9d9;border-radius:1.2px;box-sizing:border-box"></div>
<svg class="b" style="left:804.05px;top:37.00px;" width="6" height="6" viewBox="0 0 6 6"><path d="M0.5 1.6V5.4H4.6V3.8" fill="none" stroke="#555" stroke-width="0.6"/><path d="M2.4 3.4L5.2 0.6M3.6 0.6H5.4V2.4" fill="none" stroke="#555" stroke-width="0.6"/></svg>
<div class="b" style="left:815.20px;top:34.10px;width:11.50px;height:11.40px;background:#eeeeee;border:0.9px solid #d9d9d9;border-radius:1.2px;box-sizing:border-box"></div>
<svg class="b" style="left:817.95px;top:36.80px;" width="6" height="6" viewBox="0 0 6 6"><path d="M3 0.2L3.8 2.2H5.9L4.2 3.5L4.8 5.6L3 4.3L1.2 5.6L1.8 3.5L0.1 2.2H2.2Z" fill="#222"/></svg>
<div class="b" style="left:829.10px;top:34.10px;width:11.40px;height:11.40px;background:#eeeeee;border:0.9px solid #d9d9d9;border-radius:1.2px;box-sizing:border-box"></div>
<div class="t" style="left:833.30px;top:35.00px;height:10px;line-height:10px;font-size:5.5px;color:#444;font-weight:400;">?</div>
<div class="t" style="left:251.00px;top:56.60px;height:16px;line-height:16px;font-size:12.2px;color:#1e1e1e;font-weight:400;-webkit-text-stroke:0.12px #1e1e1e;transform:scaleX(0.921);transform-origin:0 50%;">Seiteninhalt auf Seite "Die Welt der Pinguine" bearbeiten</div>
<div class="b" style="left:250.50px;top:81.50px;width:590.10px;height:396.50px;background:#f9f9f9;border:0.9px solid #dedede;border-bottom:none;box-sizing:border-box"></div>
<div class="b" style="left:250.50px;top:81.50px;width:590.10px;height:14.80px;background:#ebebeb;border:0.9px solid #dedede;box-sizing:border-box"></div>
<div class="b" style="left:289.60px;top:81.50px;width:34.10px;height:14.90px;background:#f9f9f9"></div>
<div class="t" style="left:256.20px;top:83.90px;height:10px;line-height:10px;font-size:6.8px;color:#444;font-weight:400;transform:scaleX(0.855);transform-origin:0 50%;">Allgemein</div>
<div class="t" style="left:295.30px;top:83.90px;height:10px;line-height:10px;font-size:6.8px;color:#333;font-weight:400;transform:scaleX(0.875);transform-origin:0 50%;">Settings</div>
<div class="b" style="left:250.50px;top:153.55px;width:590.10px;height:0.90px;background:#e2e2e2"></div>
<div class="b" style="left:250.50px;top:252.05px;width:590.10px;height:0.90px;background:#e2e2e2"></div>
<div class="b" style="left:250.50px;top:293.95px;width:590.10px;height:0.90px;background:#e2e2e2"></div>
<div class="b" style="left:250.50px;top:337.75px;width:590.10px;height:0.90px;background:#e2e2e2"></div>
<div class="b" style="left:250.50px;top:380.85px;width:590.10px;height:0.90px;background:#e2e2e2"></div>
<div class="b" style="left:250.50px;top:424.05px;width:590.10px;height:0.90px;background:#e2e2e2"></div>
<div class="t" style="left:256.80px;top:100.30px;height:12px;line-height:12px;font-size:7.58px;color:#333;font-weight:400;">Inhaltselement</div>
<div class="t" style="left:256.80px;top:113.00px;height:10px;line-height:10px;font-size:5.95px;color:#222;font-weight:700;letter-spacing:0.17px;">Typ</div>
<div class="b" style="left:256.30px;top:128.00px;width:166.10px;height:14.30px;background:#fff;border:0.9px solid #d4d4d4;border-radius:1px;box-sizing:border-box"></div>
<div class="b" style="left:256.80px;top:128.50px;width:13.80px;height:13.30px;background:#f2f2f2;border-right:0.9px solid #d8d8d8;box-sizing:border-box"></div>
<svg class="b" style="left:260.40px;top:132.10px;" width="6" height="6" viewBox="0 0 6 6"><rect x="0.6" y="1" width="4.8" height="4.4" fill="none" stroke="#333" stroke-width="0.7"/><rect x="0.6" y="1" width="4.8" height="1.3" fill="#333"/><path d="M1.8 0.2V1.2M4.2 0.2V1.2" stroke="#333" stroke-width="0.6"/></svg>
<div class="t" style="left:273.90px;top:130.20px;height:10px;line-height:10px;font-size:5.93px;color:#444;font-weight:400;">Tripdescription</div>
<svg class="b" style="left:414.60px;top:133.70px;" width="4" height="3" viewBox="0 0 4 3"><path d="M0.6 0.8L2 2.2L3.4 0.8" fill="none" stroke="#777" stroke-width="0.6"/></svg>
<div class="t" style="left:453.70px;top:113.00px;height:10px;line-height:10px;font-size:5.95px;color:#222;font-weight:700;letter-spacing:0.17px;">Spalte</div>
<div class="b" style="left:453.30px;top:128.00px;width:192.50px;height:14.30px;background:#fff;border:0.9px solid #d4d4d4;border-radius:1px;box-sizing:border-box"></div>
<div class="t" style="left:456.80px;top:130.20px;height:10px;line-height:10px;font-size:5.9px;color:#3c3c3c;font-weight:400;letter-spacing:0.14px;">Reiseverlauf</div>
<div class="t" style="left:651.00px;top:113.00px;height:10px;line-height:10px;font-size:5.95px;color:#222;font-weight:700;letter-spacing:0.17px;">Season</div>
<div class="b" style="left:651.20px;top:128.00px;width:99.50px;height:14.30px;background:#fff;border:0.9px solid #d4d4d4;border-radius:1px;box-sizing:border-box"></div>
<div class="b" style="left:651.70px;top:128.50px;width:13.60px;height:13.30px;background:#f2f2f2;border-right:0.9px solid #d8d8d8;box-sizing:border-box"></div>
<svg class="b" style="left:655.30px;top:132.10px;" width="6" height="6" viewBox="0 0 6 6"><rect x="0.6" y="1" width="4.8" height="4.4" fill="none" stroke="#444" stroke-width="0.7"/><rect x="0.6" y="1" width="4.8" height="1.3" fill="#444"/><path d="M1.8 0.2V1.2M4.2 0.2V1.2" stroke="#444" stroke-width="0.6"/></svg>
<div class="t" style="left:668.00px;top:130.20px;height:10px;line-height:10px;font-size:5.9px;color:#3c3c3c;font-weight:400;letter-spacing:0.14px;">Season:Saison 2025</div>
<svg class="b" style="left:743.00px;top:133.70px;" width="4" height="3" viewBox="0 0 4 3"><path d="M0.6 0.8L2 2.2L3.4 0.8" fill="none" stroke="#777" stroke-width="0.6"/></svg>
<div class="t" style="left:256.80px;top:159.00px;height:12px;line-height:12px;font-size:7.58px;color:#333;font-weight:400;">Überschrift</div>
<div class="t" style="left:256.80px;top:172.00px;height:10px;line-height:10px;font-size:5.95px;color:#222;font-weight:700;letter-spacing:0.17px;">Headline</div>
<div class="b" style="left:256.30px;top:187.10px;width:282.40px;height:14.30px;background:#fff;border:0.9px solid #d4d4d4;border-radius:1px;box-sizing:border-box"></div>
<div class="t" style="left:259.60px;top:189.30px;height:10px;line-height:10px;font-size:5.9px;color:#484848;font-weight:400;letter-spacing:0.14px;">Standard</div>
<svg class="b" style="left:530.70px;top:192.80px;" width="4" height="3" viewBox="0 0 4 3"><path d="M0.6 0.8L2 2.2L3.4 0.8" fill="none" stroke="#777" stroke-width="0.6"/></svg>
<div class="t" style="left:552.00px;top:172.00px;height:10px;line-height:10px;font-size:5.95px;color:#222;font-weight:700;letter-spacing:0.17px;">Größe der Headline</div>
<div class="b" style="left:552.00px;top:187.10px;width:282.60px;height:14.30px;background:#fff;border:0.9px solid #d4d4d4;border-radius:1px;box-sizing:border-box"></div>
<div class="t" style="left:555.40px;top:189.30px;height:10px;line-height:10px;font-size:5.9px;color:#484848;font-weight:400;letter-spacing:0.14px;">Standard (100%)</div>
<svg class="b" style="left:826.60px;top:192.80px;" width="4" height="3" viewBox="0 0 4 3"><path d="M0.6 0.8L2 2.2L3.4 0.8" fill="none" stroke="#777" stroke-width="0.6"/></svg>
<div class="t" style="left:256.80px;top:211.00px;height:10px;line-height:10px;font-size:5.95px;color:#222;font-weight:700;letter-spacing:0.17px;">Ausrichtung:</div>
<div class="b" style="left:256.30px;top:226.20px;width:53.50px;height:14.30px;background:#fff;border:0.9px solid #d4d4d4;border-radius:1px;box-sizing:border-box"></div>
<div class="t" style="left:259.60px;top:228.40px;height:10px;line-height:10px;font-size:5.9px;color:#484848;font-weight:400;letter-spacing:0.14px;">Standard</div>
<svg class="b" style="left:301.60px;top:231.90px;" width="4" height="3" viewBox="0 0 4 3"><path d="M0.6 0.8L2 2.2L3.4 0.8" fill="none" stroke="#777" stroke-width="0.6"/></svg>
<div class="t" style="left:552.00px;top:211.00px;height:10px;line-height:10px;font-size:5.95px;color:#222;font-weight:700;letter-spacing:0.17px;">Schriftfarbe des Headers</div>
<div class="b" style="left:552.00px;top:226.20px;width:282.60px;height:14.30px;background:#fff;border:0.9px solid #d4d4d4;border-radius:1px;box-sizing:border-box"></div>
<div class="t" style="left:555.40px;top:228.40px;height:10px;line-height:10px;font-size:5.9px;color:#484848;font-weight:400;letter-spacing:0.14px;">Standard-Schriftfarbe</div>
<svg class="b" style="left:826.60px;top:231.90px;" width="4" height="3" viewBox="0 0 4 3"><path d="M0.6 0.8L2 2.2L3.4 0.8" fill="none" stroke="#777" stroke-width="0.6"/></svg>
<div class="t" style="left:256.60px;top:258.20px;height:10px;line-height:10px;font-size:5.95px;color:#222;font-weight:700;letter-spacing:0.17px;">Sichtbarkeit des Inhaltselements</div>
<div class="b" style="left:256.50px;top:273.90px;width:15.70px;height:8.80px;background:#62a033;border-radius:5px"></div>
<div class="b" style="left:266.20px;top:275.00px;width:4.90px;height:6.60px;background:#fff;border-radius:50%"></div>
<div class="t" style="left:256.60px;top:300.40px;height:10px;line-height:10px;font-size:5.95px;color:#222;font-weight:700;letter-spacing:0.17px;">Divider nach dem Element hinzufügen</div>
<div class="b" style="left:256.30px;top:315.60px;width:578.30px;height:14.10px;background:#fff;border:0.9px solid #d4d4d4;border-radius:1px;box-sizing:border-box"></div>
<div class="t" style="left:259.70px;top:317.90px;height:10px;line-height:10px;font-size:5.75px;color:#777;font-weight:400;">Kein Divider</div>
<div class="t" style="left:256.60px;top:343.90px;height:10px;line-height:10px;font-size:5.95px;color:#222;font-weight:700;letter-spacing:0.17px;">Veröffentlichungsdatum</div>
<div class="b" style="left:256.30px;top:359.50px;width:89.90px;height:13.80px;background:#fff;border:0.9px solid #d4d4d4;border-radius:1px;box-sizing:border-box"></div>
<div class="b" style="left:333.30px;top:359.50px;width:12.90px;height:13.80px;background:#efefef;border:0.9px solid #d4d4d4;border-radius:0 1px 1px 0;box-sizing:border-box"></div>
<svg class="b" style="left:336.80px;top:363.20px;" width="6" height="6" viewBox="0 0 6 6"><rect x="0.6" y="1" width="4.8" height="4.4" fill="none" stroke="#555" stroke-width="0.7"/><rect x="0.6" y="1" width="4.8" height="1.3" fill="#555"/><path d="M1.8 0.2V1.2M4.2 0.2V1.2" stroke="#555" stroke-width="0.6"/></svg>
<div class="t" style="left:256.60px;top:387.10px;height:10px;line-height:10px;font-size:5.95px;color:#222;font-weight:700;letter-spacing:0.17px;">Ablaufdatum</div>
<div class="b" style="left:256.30px;top:402.60px;width:89.90px;height:13.80px;background:#fff;border:0.9px solid #d4d4d4;border-radius:1px;box-sizing:border-box"></div>
<div class="b" style="left:333.30px;top:402.60px;width:12.90px;height:13.80px;background:#efefef;border:0.9px solid #d4d4d4;border-radius:0 1px 1px 0;box-sizing:border-box"></div>
<svg class="b" style="left:336.80px;top:406.40px;" width="6" height="6" viewBox="0 0 6 6"><rect x="0.6" y="1" width="4.8" height="4.4" fill="none" stroke="#555" stroke-width="0.7"/><rect x="0.6" y="1" width="4.8" height="1.3" fill="#555"/><path d="M1.8 0.2V1.2M4.2 0.2V1.2" stroke="#555" stroke-width="0.6"/></svg>
<div class="t" style="left:256.60px;top:430.70px;height:10px;line-height:10px;font-size:5.95px;color:#222;font-weight:700;letter-spacing:0.17px;">Nur für zutreffende Personas:</div>
<div class="t" style="left:256.60px;top:440.70px;height:10px;line-height:10px;font-size:5.95px;color:#222;font-weight:700;letter-spacing:0.17px;">Ausgewählte Objekte</div>
<div class="b" style="left:256.30px;top:452.40px;width:578.30px;height:37.60px;background:#fff;border:0.9px solid #d4d4d4;border-radius:1px;box-sizing:border-box"></div>
<div class="b" style="left:848.50px;top:47.40px;width:0.80px;height:430.60px;background:#e6e6e6"></div>
<div class="b" style="left:289.60px;top:80.20px;width:34.20px;height:16.50px;border:2.2px solid #e2001a;box-sizing:border-box"></div>
<div class="b" style="left:647.70px;top:107.30px;width:108.80px;height:44.70px;border:2.2px solid #e2001a;box-sizing:border-box"></div>
<div class="b" style="left:107px;top:477px;width:744px;height:1px;background:#fdfdfd"></div>
</div>
<div class="b" style="left:852px;top:18px;width:1px;height:242px;background:#f4f4f4"></div>
<div class="b" style="left:365px;top:260px;width:486px;height:1px;background:#fafafa"></div><div class="b" style="left:365px;top:260px;width:1px;height:218px;background:#fafafa"></div>
<div class="scr" style="left:366px;top:261px;width:853px;height:345px;transform:scale(0.912);transform-origin:0 0"><div class="b" style="left:0.00px;top:0.00px;width:851.00px;height:19.20px;background:#161616"></div>
<div class="b" style="left:0.00px;top:0.00px;width:36.40px;height:19.20px;background:#2b2b2b"></div>
<svg class="b" style="left:5.80px;top:5.20px;" width="7.2" height="7.2" viewBox="0 0 7.2 7.2"><rect x="0" y="0" width="7.2" height="7.2" fill="#bdbdbd"/><path d="M0 2.4H7.2M0 4.8H7.2M2.4 0V7.2M4.8 0V7.2" stroke="#2b2b2b" stroke-width="0.6"/></svg>
<svg class="b" style="left:24.00px;top:5.40px;" width="6.3" height="7" viewBox="0 0 6.3 7"><rect x="0" y="0" width="6.3" height="7" fill="#bdbdbd"/><path d="M2.3 0V7M0 2.3H2.3M0 4.6H2.3M2.3 3.5H6.3" stroke="#2b2b2b" stroke-width="0.6"/></svg>
<svg class="b" style="left:44.50px;top:2.50px;" width="70" height="14" viewBox="0 0 70 14"><text x="0.6" y="12.5" font-family="Liberation Sans" font-weight="700" font-size="16.6" fill="#fff" stroke="#fff" stroke-width="0.45" textLength="32.4" lengthAdjust="spacingAndGlyphs">DFAU</text><text x="38.2" y="7.9" font-family="Liberation Sans" font-weight="400" font-size="10.2" fill="#e0e0e0" textLength="29.5" lengthAdjust="spacingAndGlyphs">IDEEN IN</text><text x="38.2" y="12.3" font-family="Liberation Sans" font-weight="400" font-size="5.1" fill="#cfcfcf" textLength="29.5" lengthAdjust="spacingAndGlyphs">ENTWICKLUNG</text></svg>
<div class="t" style="left:119.00px;top:1.00px;height:10px;line-height:10px;font-size:6.5px;color:#f0f0f0;font-weight:700;transform:scaleX(0.86);transform-origin:0 50%;">Demo toujou</div>
<div class="t" style="left:119.00px;top:7.80px;height:10px;line-height:10px;font-size:5.8px;color:#9a9a9a;font-weight:400;letter-spacing:0.25px;">10.4.26</div>
<div class="b" style="left:720.00px;top:0.00px;width:131.00px;height:18.50px;background:#2b2b2b"></div>
<svg class="b" style="left:640.20px;top:5.30px;" width="8.2" height="8" viewBox="0 0 8.2 8"><path d="M4.1 0.2L5.2 3H8.1L5.8 4.8L6.6 7.7L4.1 6L1.6 7.7L2.4 4.8L0.1 3H3Z" fill="#d6d6d6"/></svg>
<svg class="b" style="left:656.60px;top:5.30px;" width="8.2" height="8.2" viewBox="0 0 8.2 8.2"><circle cx="4.1" cy="4.1" r="3.5" fill="none" stroke="#d6d6d6" stroke-width="0.9"/><path d="M2.8 3.2Q2.9 1.9 4.1 1.9Q5.4 1.9 5.4 3.1Q5.4 3.9 4.3 4.4V5.1" fill="none" stroke="#d6d6d6" stroke-width="0.8"/><circle cx="4.25" cy="6.2" r="0.5" fill="#d6d6d6"/></svg>
<svg class="b" style="left:673.30px;top:3.20px;" width="12.4" height="12.4" viewBox="0 0 12.4 12.4"><circle cx="6.2" cy="6.2" r="6.2" fill="#6e6e6e"/><circle cx="6.2" cy="4.6" r="2.1" fill="#fff"/><path d="M2.6 9.6Q2.8 6.9 6.2 6.9Q9.6 6.9 9.8 9.6Z" fill="#fff"/></svg>
<div class="t" style="left:688.90px;top:4.30px;height:10px;line-height:10px;font-size:5.95px;color:#e4e4e4;font-weight:400;">BW editor</div>
<svg class="b" style="left:727.00px;top:5.70px;" width="7" height="7" viewBox="0 0 7 7"><circle cx="2.9" cy="2.9" r="2.3" fill="none" stroke="#e8e8e8" stroke-width="1"/><path d="M4.6 4.6L6.6 6.6" stroke="#e8e8e8" stroke-width="1.1"/></svg>
<div class="t" style="left:737.40px;top:4.30px;height:10px;line-height:10px;font-size:5.45px;color:#f0f0f0;font-weight:700;">Suchen</div>
<div class="b" style="left:0.00px;top:18.50px;width:107.20px;height:459.50px;background:#2b2b2b"></div>
<div class="b" style="left:5.90px;top:65.90px;width:96.00px;height:18.00px;background:#555;border:0.8px solid #646464;border-radius:1.2px;box-sizing:border-box"></div>
<div class="b" style="left:8.10px;top:26.40px;width:14.20px;height:14.30px;background:#a8217a"></div>
<svg class="b" style="left:8.20px;top:26.60px;" width="14" height="14" viewBox="0 0 14 14"><g transform="translate(7 7)"><rect x="-4" y="-3.4" width="8" height="6.8" fill="#fff"/><rect x="-3.2" y="-2.2" width="4" height="1.6" fill="#a8217a"/><rect x="1.2" y="-2.6" width="2" height="3" fill="#a8217a"/><rect x="-3.2" y="0.6" width="6.4" height="1.6" fill="#e3a9cb"/></g></svg>
<div class="t" style="left:27.20px;top:28.80px;height:10px;line-height:10px;font-size:6.6px;color:#f2f2f2;font-weight:700;transform:scaleX(0.85);transform-origin:0 50%;">Dashboard</div>
<svg class="b" style="left:8.20px;top:49.60px;" width="14" height="14" viewBox="0 0 14 14"><g transform="translate(7 7)"><path d="M-2.7 -3.6H1.2L2.8 -2V3.6H-2.7Z" fill="none" stroke="#e0e0e0" stroke-width="0.7"/></g></svg>
<div class="t" style="left:27.20px;top:51.80px;height:10px;line-height:10px;font-size:6.6px;color:#f2f2f2;font-weight:700;transform:scaleX(0.85);transform-origin:0 50%;">Web</div>
<svg class="b" style="left:90.30px;top:55.30px;" width="5" height="3" viewBox="0 0 5 3"><path d="M0.6 2.5L2.5 0.7L4.4 2.5" fill="none" stroke="#e0e0e0" stroke-width="0.95"/></svg>
<div class="b" style="left:8.10px;top:67.80px;width:14.20px;height:14.30px;background:#f0882a"></div>
<svg class="b" style="left:8.20px;top:68.00px;" width="14" height="14" viewBox="0 0 14 14"><g transform="translate(7 7)"><path d="M-2.8 -3.9H1.4L2.9 -2.4V3.9H-2.8Z" fill="#fff"/><rect x="-1.4" y="-0.4" width="2.6" height="2.4" fill="#f6c7a0"/></g></svg>
<div class="t" style="left:27.20px;top:70.20px;height:10px;line-height:10px;font-size:6.6px;color:#f2f2f2;font-weight:700;transform:scaleX(0.85);transform-origin:0 50%;">Seite</div>
<div class="b" style="left:8.10px;top:85.80px;width:14.20px;height:14.30px;background:#d8403a"></div>
<svg class="b" style="left:8.20px;top:86.00px;" width="14" height="14" viewBox="0 0 14 14"><g transform="translate(7 7)"><path d="M-4.2 0Q0 -4 4.2 0Q0 4 -4.2 0Z" fill="#fff"/><circle cx="0" cy="0" r="1.6" fill="#d8403a"/><circle cx="0" cy="0" r="0.7" fill="#fff"/></g></svg>
<div class="t" style="left:27.20px;top:88.20px;height:10px;line-height:10px;font-size:6.6px;color:#f2f2f2;font-weight:700;transform:scaleX(0.85);transform-origin:0 50%;">Anzeigen</div>
<div class="b" style="left:8.10px;top:103.80px;width:14.20px;height:14.30px;background:#dd6b2e"></div>
<svg class="b" style="left:8.20px;top:104.00px;" width="14" height="14" viewBox="0 0 14 14"><g transform="translate(7 7)"><rect x="-3.6" y="-3.6" width="7.2" height="7.2" fill="#f3b48f"/><path d="M-3.6 -1.2H3.6M-3.6 1.2H3.6" stroke="#dd6b2e" stroke-width="0.6"/></g></svg>
<div class="t" style="left:27.20px;top:106.20px;height:10px;line-height:10px;font-size:6.6px;color:#f2f2f2;font-weight:700;transform:scaleX(0.85);transform-origin:0 50%;">Liste</div>
<div class="b" style="left:8.10px;top:121.80px;width:14.20px;height:14.30px;background:#3f7fba"></div>
<svg class="b" style="left:8.20px;top:122.00px;" width="14" height="14" viewBox="0 0 14 14"><g transform="translate(7 7)"><rect x="-3" y="-4" width="6" height="8" fill="#d5e3f0"/><rect x="-1.8" y="-2.6" width="3.6" height="1" fill="#3f7fba"/><rect x="-1.8" y="-0.4" width="1.4" height="1" fill="#3f7fba"/><rect x="0.4" y="-0.4" width="1.4" height="1" fill="#3f7fba"/><rect x="-1.8" y="1.6" width="1.4" height="1" fill="#3f7fba"/></g></svg>
<div class="t" style="left:27.20px;top:124.20px;height:10px;line-height:10px;font-size:6.6px;color:#f2f2f2;font-weight:700;transform:scaleX(0.85);transform-origin:0 50%;">Formulare</div>
<div class="b" style="left:8.10px;top:139.80px;width:14.20px;height:14.30px;background:#2b7fe0"></div>
<svg class="b" style="left:8.20px;top:140.00px;" width="14" height="14" viewBox="0 0 14 14"><g transform="translate(7 7)"><circle cx="-1.4" cy="-1.6" r="1.6" fill="#fff"/><path d="M-4.4 3.4Q-4.2 0.6 -1.4 0.6Q1.4 0.6 1.6 3.4Z" fill="#fff"/><path d="M4.2 -3Q2.4 0 4.2 3" fill="none" stroke="#fff" stroke-width="1"/></g></svg>
<div class="t" style="left:27.20px;top:142.20px;height:10px;line-height:10px;font-size:6.6px;color:#f2f2f2;font-weight:700;transform:scaleX(0.85);transform-origin:0 50%;">Contact Information</div>
<div class="b" style="left:8.10px;top:158.00px;width:14.20px;height:14.30px;background:#3f9c8f"></div>
<svg class="b" style="left:8.20px;top:158.20px;" width="14" height="14" viewBox="0 0 14 14"><g transform="translate(7 7)"><path d="M-3.6 2.4Q-5 2.4 -5 0.9Q-5 -0.6 -3.4 -0.6Q-3.2 -3.2 -0.4 -3.2Q2 -3.2 2.6 -1Q5 -1 5 0.9Q5 2.4 3.5 2.4Z" fill="none" stroke="#fff" stroke-width="0.9"/><path d="M0 -0.4V2M-1.1 0.7L0 -0.5L1.1 0.7" fill="none" stroke="#fff" stroke-width="0.8"/></g></svg>
<div class="t" style="left:27.20px;top:160.40px;height:10px;line-height:10px;font-size:6.6px;color:#f2f2f2;font-weight:700;transform:scaleX(0.85);transform-origin:0 50%;">Data Import</div>
<svg class="b" style="left:8.20px;top:176.40px;" width="14" height="14" viewBox="0 0 14 14"><g transform="translate(7 7)"><path d="M-6 4.6H5.5" stroke="#fff" stroke-width="0.9"/><path d="M-5.6 -3.2L-4.4 -3.4L-2.6 -1.6L3.6 -0.6Q5.6 0 5 1Q4.6 1.6 3 1.4L-4.4 0.2Z" fill="#fff"/><path d="M-2.4 -4.4L-1 -4.4L1.6 -1L-0.6 -1.2Z" fill="#fff"/></g></svg>
<div class="t" style="left:27.20px;top:178.60px;height:10px;line-height:10px;font-size:6.6px;color:#f2f2f2;font-weight:700;transform:scaleX(0.85);transform-origin:0 50%;">toujou Tourism</div>
<svg class="b" style="left:8.20px;top:199.80px;" width="14" height="14" viewBox="0 0 14 14"><g transform="translate(7 7)"><path d="M0 -3.8L3.3 -1.9V1.9L0 3.8L-3.3 1.9V-1.9Z" fill="#bdbdbd"/><path d="M-3.3 -1.9L0 0L3.3 -1.9M0 0V3.8M-1.6 -2.8L1.6 -1M1.6 -2.8L-1.6 -1M-3.3 0.2L-1.6 1.1M3.3 0.2L1.6 1.1" stroke="#2b2b2b" stroke-width="0.45"/></g></svg>
<div class="t" style="left:27.20px;top:202.00px;height:10px;line-height:10px;font-size:6.6px;color:#f2f2f2;font-weight:700;transform:scaleX(0.85);transform-origin:0 50%;">toujou settings</div>
<svg class="b" style="left:90.30px;top:205.50px;" width="5" height="3" viewBox="0 0 5 3"><path d="M0.6 2.5L2.5 0.7L4.4 2.5" fill="none" stroke="#e0e0e0" stroke-width="0.95"/></svg>
<div class="b" style="left:8.10px;top:217.60px;width:14.20px;height:14.30px;background:#e0324c"></div>
<svg class="b" style="left:8.20px;top:217.80px;" width="14" height="14" viewBox="0 0 14 14"><g transform="translate(7 7)"><path d="M-3.6 1.5Q-4.2 -4 0 -4.1Q4.2 -4 3.6 1.5M-2.6 3Q-3.2 -2.9 0 -3Q3.2 -2.9 2.7 2.6M-1.6 3.7Q-2.2 -1.8 0 -1.9Q2.2 -1.8 1.8 3.4M-0.6 3.9Q-0.9 -0.8 0 -0.8Q0.9 -0.8 0.8 3.6M-4 -0.8Q-4.4 2.8 -3.2 3.6" fill="none" stroke="#f9d0d6" stroke-width="0.55"/></g></svg>
<div class="t" style="left:27.20px;top:220.00px;height:10px;line-height:10px;font-size:6.6px;color:#f2f2f2;font-weight:700;transform:scaleX(0.85);transform-origin:0 50%;">toujou Theme</div>
<svg class="b" style="left:8.20px;top:240.80px;" width="14" height="14" viewBox="0 0 14 14"><g transform="translate(7 7)"><rect x="-3.6" y="-3" width="7" height="6.4" rx="1.2" fill="none" stroke="#e6e6e6" stroke-width="0.8"/><path d="M-2 -1.6L-0.4 1.6M1.6 -1.8L-0.6 3.4" fill="none" stroke="#e6e6e6" stroke-width="0.9"/></g></svg>
<div class="t" style="left:27.20px;top:243.00px;height:10px;line-height:10px;font-size:6.6px;color:#f2f2f2;font-weight:700;transform:scaleX(0.85);transform-origin:0 50%;">Yoast SEO</div>
<svg class="b" style="left:90.30px;top:246.50px;" width="5" height="3" viewBox="0 0 5 3"><path d="M0.6 2.5L2.5 0.7L4.4 2.5" fill="none" stroke="#e0e0e0" stroke-width="0.95"/></svg>
<div class="b" style="left:8.10px;top:259.00px;width:14.20px;height:14.30px;background:#a2287a"></div>
<svg class="b" style="left:8.20px;top:259.20px;" width="14" height="14" viewBox="0 0 14 14"><g transform="translate(7 7)"><circle cx="0" cy="-2.6" r="0.9" fill="#fff"/><path d="M-1.6 -1.2H0.9V2.6H1.6V3.6H-1.6V2.6H-0.8V-0.2H-1.6Z" fill="#fff"/></g></svg>
<div class="t" style="left:27.20px;top:261.40px;height:10px;line-height:10px;font-size:6.6px;color:#f2f2f2;font-weight:700;transform:scaleX(0.85);transform-origin:0 50%;">Dashboard</div>
<div class="b" style="left:8.10px;top:277.00px;width:14.20px;height:14.30px;background:#8cc63f"></div>
<svg class="b" style="left:8.20px;top:277.20px;" width="14" height="14" viewBox="0 0 14 14"><g transform="translate(7 7)"><rect x="-4" y="-3.3" width="8" height="1.5" fill="#fff"/><rect x="-4" y="-0.75" width="8" height="1.5" fill="#fff"/><rect x="-4" y="1.8" width="8" height="1.5" fill="#fff"/></g></svg>
<div class="t" style="left:27.20px;top:279.40px;height:10px;line-height:10px;font-size:6.6px;color:#f2f2f2;font-weight:700;transform:scaleX(0.85);transform-origin:0 50%;">Übersicht</div>
<svg class="b" style="left:8.20px;top:300.20px;" width="14" height="14" viewBox="0 0 14 14"><g transform="translate(7 7)"><rect x="-3.6" y="-3.2" width="7.2" height="6.4" fill="none" stroke="#d6d6d6" stroke-width="0.8"/><rect x="-2.4" y="-2" width="2.4" height="2" fill="#d6d6d6"/><path d="M0.8 -1.6H2.6M0.8 0H2.6M-2.4 1.6H2.6" stroke="#d6d6d6" stroke-width="0.6"/></g></svg>
<div class="t" style="left:27.20px;top:302.40px;height:10px;line-height:10px;font-size:6.6px;color:#f2f2f2;font-weight:700;transform:scaleX(0.85);transform-origin:0 50%;">Blog</div>
<svg class="b" style="left:90.30px;top:305.90px;" width="5" height="3" viewBox="0 0 5 3"><path d="M0.6 2.5L2.5 0.7L4.4 2.5" fill="none" stroke="#e0e0e0" stroke-width="0.95"/></svg>
<div class="b" style="left:8.10px;top:318.20px;width:14.20px;height:14.30px;background:#56a647"></div>
<svg class="b" style="left:8.20px;top:318.40px;" width="14" height="14" viewBox="0 0 14 14"><g transform="translate(7 7)"><rect x="-3.6" y="-3.6" width="7.2" height="7.2" fill="#d8edd3"/><rect x="-2.6" y="-2.6" width="2.6" height="2.4" fill="#56a647"/><path d="M1 -3.2V-0.8M-0.2 -2H2.2" stroke="#56a647" stroke-width="0.7"/></g></svg>
<div class="t" style="left:27.20px;top:320.60px;height:10px;line-height:10px;font-size:6.6px;color:#f2f2f2;font-weight:700;transform:scaleX(0.85);transform-origin:0 50%;">Posts</div>
<div class="b" style="left:8.10px;top:336.20px;width:14.20px;height:14.30px;background:#56a647"></div>
<svg class="b" style="left:8.20px;top:336.40px;" width="14" height="14" viewBox="0 0 14 14"><g transform="translate(7 7)"><path d="M-3.6 -3.8H3.6V2.4H1L0 3.8L-1 2.4H-3.6Z" fill="#fff"/><path d="M-2.2 -2H2.2M-2.2 -0.6H2.2" stroke="#56a647" stroke-width="0.6"/></g></svg>
<div class="t" style="left:27.20px;top:338.60px;height:10px;line-height:10px;font-size:6.6px;color:#f2f2f2;font-weight:700;transform:scaleX(0.85);transform-origin:0 50%;">Comments</div>
<svg class="b" style="left:8.20px;top:359.80px;" width="14" height="14" viewBox="0 0 14 14"><g transform="translate(7 7)"><circle cx="0" cy="0" r="3.8" fill="#e0e0e0"/><path d="M-2.6 -2.8Q-1 -1.6 -1.6 0Q-0.4 1 -1 3.4M1.2 -3.6Q0.6 -1.6 2.4 -1.2Q3.4 0.6 2 2.6" fill="none" stroke="#2b2b2b" stroke-width="0.8"/></g></svg>
<div class="t" style="left:27.20px;top:362.00px;height:10px;line-height:10px;font-size:6.6px;color:#f2f2f2;font-weight:700;transform:scaleX(0.85);transform-origin:0 50%;">Seitenverwaltung</div>
<svg class="b" style="left:90.30px;top:365.50px;" width="5" height="3" viewBox="0 0 5 3"><path d="M0.6 2.5L2.5 0.7L4.4 2.5" fill="none" stroke="#e0e0e0" stroke-width="0.95"/></svg>
<div class="b" style="left:8.10px;top:377.60px;width:14.20px;height:14.30px;background:#4a90ee"></div>
<svg class="b" style="left:8.20px;top:377.80px;" width="14" height="14" viewBox="0 0 14 14"><g transform="translate(7 7)"><path d="M2.6 -1.8A3 3 0 1 0 2.8 1.6" fill="none" stroke="#fff" stroke-width="1"/><path d="M1.4 -3.2L3.4 -1.2L1.4 0Z" fill="#fff"/></g></svg>
<div class="t" style="left:27.20px;top:380.00px;height:10px;line-height:10px;font-size:6.6px;color:#f2f2f2;font-weight:700;transform:scaleX(0.85);transform-origin:0 50%;">Weiterleitungen</div>
<svg class="b" style="left:8.20px;top:400.70px;" width="14" height="14" viewBox="0 0 14 14"><g transform="translate(7 7)"><rect x="-3.6" y="-3" width="7.2" height="6" fill="none" stroke="#d6d6d6" stroke-width="0.8"/><path d="M-3.2 2.6L-1 -0.6L1 1.4L2 0.4L3.2 2.6Z" fill="#d6d6d6"/></g></svg>
<div class="t" style="left:27.20px;top:402.90px;height:10px;line-height:10px;font-size:6.6px;color:#f2f2f2;font-weight:700;transform:scaleX(0.85);transform-origin:0 50%;">Datei</div>
<svg class="b" style="left:90.30px;top:406.40px;" width="5" height="3" viewBox="0 0 5 3"><path d="M0.6 2.5L2.5 0.7L4.4 2.5" fill="none" stroke="#e0e0e0" stroke-width="0.95"/></svg>
<div class="b" style="left:8.10px;top:418.60px;width:14.20px;height:14.30px;background:#4f8f3e"></div>
<svg class="b" style="left:8.20px;top:418.80px;" width="14" height="14" viewBox="0 0 14 14"><g transform="translate(7 7)"><path d="M-3.2 2.8Q-4.6 2.8 -4.6 1.2Q-4.6 -0.6 -2.8 -0.6Q-2.4 -3 0 -3Q2.4 -3 2.8 -0.8Q4.6 -0.8 4.6 1Q4.6 2.8 3 2.8Z" fill="#fff"/><path d="M0.2 -3V2.8" stroke="#4f8f3e" stroke-width="0.5"/></g></svg>
<div class="t" style="left:27.20px;top:421.00px;height:10px;line-height:10px;font-size:6.6px;color:#f2f2f2;font-weight:700;transform:scaleX(0.85);transform-origin:0 50%;">Dateiliste</div>
<div class="b" style="left:107.00px;top:18.50px;width:133.00px;height:459.50px;background:#f3f3f3"></div>
<div class="b" style="left:107.00px;top:18.50px;width:133.00px;height:39.70px;background:#ececec;border-bottom:0.9px solid #dcdcdc;box-sizing:border-box"></div>
<div class="b" style="left:111.30px;top:20.80px;width:22.70px;height:11.60px;background:#f4f4f4;border:0.8px solid #dadada;border-radius:1px;box-sizing:border-box"></div>
<div class="b" style="left:111.30px;top:20.80px;width:11.70px;height:11.60px;background:#d9d9d9;border:0.8px solid #cdcdcd;border-radius:1px;box-sizing:border-box"></div>
<svg class="b" style="left:114.00px;top:23.00px;" width="7" height="7.5" viewBox="0 0 7 7.5"><path d="M0.6 0.5H3.8L5.6 2.3V4.2M3 7H0.6V0.5" fill="none" stroke="#555" stroke-width="0.7"/><path d="M3.5 6.8L5 4.8L6.6 6.8Z" fill="#333"/></svg>
<svg class="b" style="left:125.60px;top:23.30px;" width="6.5" height="7" viewBox="0 0 6.5 7"><path d="M0.4 0.6H6.1L3.9 3.6V6.4L2.6 5.6V3.6Z" fill="none" stroke="#666" stroke-width="0.6"/></svg>
<div class="b" style="left:224.00px;top:21.00px;width:11.70px;height:11.20px;background:#f2f2f2;border:0.8px solid #dadada;border-radius:1px;box-sizing:border-box"></div>
<svg class="b" style="left:226.80px;top:23.60px;" width="6.2" height="6.2" viewBox="0 0 6.2 6.2"><path d="M5.3 2.2A2.5 2.5 0 0 0 0.9 2M0.9 4A2.5 2.5 0 0 0 5.3 4.2" fill="none" stroke="#444" stroke-width="0.8"/><path d="M5.6 0.6V2.6H3.6ZM0.6 5.6V3.6H2.6Z" fill="#444"/></svg>
<svg class="b" style="left:110.70px;top:36.20px;" width="8" height="8" viewBox="0 0 8 8"><g transform="translate(4 4)"><path d="M-2.9 2.9L-2.5 -1.2Q-2.3 -2.9 -0.9 -2.9H-0.1V-0.6L-0.6 0L-0.1 0.6V2.9Z" fill="#111"/><path d="M0.5 -2.7Q2.4 -2.7 2.5 -0.6V2.3" fill="none" stroke="#777" stroke-width="0.7"/><circle cx="2.5" cy="2.4" r="0.6" fill="#333"/></g></svg>
<svg class="b" style="left:122.60px;top:36.20px;" width="8" height="8" viewBox="0 0 8 8"><g transform="translate(4 4)"><path d="M-2.4 -3.4H1L2.6 -1.8V3.4H-2.4Z" fill="#111"/></g></svg>
<svg class="b" style="left:133.90px;top:36.20px;" width="8" height="8" viewBox="0 0 8 8"><g transform="translate(4 4)"><rect x="-3.2" y="-3.2" width="2.8" height="2.8" fill="#111"/><rect x="0.4" y="-3.2" width="2.8" height="2.8" fill="#111"/><rect x="-3.2" y="0.4" width="2.8" height="2.8" fill="#111"/><rect x="0.4" y="0.4" width="2.8" height="2.8" fill="#111"/></g></svg>
<svg class="b" style="left:145.50px;top:36.20px;" width="8" height="8" viewBox="0 0 8 8"><g transform="translate(4 4)"><circle cx="0" cy="0" r="2.9" fill="none" stroke="#666" stroke-width="0.7"/><path d="M-1.5 -0.8L0 0L1.5 -0.8M0 0V2" fill="none" stroke="#666" stroke-width="0.6"/></g></svg>
<svg class="b" style="left:156.70px;top:36.20px;" width="8" height="8" viewBox="0 0 8 8"><g transform="translate(4 4)"><rect x="-3" y="-2.6" width="6" height="5.2" fill="#111"/><rect x="-1.4" y="-1.2" width="2.8" height="2.4" fill="#eee"/></g></svg>
<svg class="b" style="left:168.50px;top:36.20px;" width="8" height="8" viewBox="0 0 8 8"><g transform="translate(4 4)"><rect x="-3.3" y="-2.4" width="6.6" height="4.8" rx="0.6" fill="#8a8a8a"/><path d="M-2.4 -1.2V1.2M-0.6 -1.2V1.2M1 -1.2V1.2" stroke="#eee" stroke-width="0.5"/></g></svg>
<svg class="b" style="left:180.00px;top:36.20px;" width="8" height="8" viewBox="0 0 8 8"><g transform="translate(4 4)"><path d="M-3.4 -2.6H-0.6L0.2 -1.8H3.4V2.6H-3.4Z" fill="#8a8a8a"/><path d="M-3.4 -0.8H3.4" stroke="#bbb" stroke-width="0.4"/></g></svg>
<svg class="b" style="left:192.00px;top:36.20px;" width="8" height="8" viewBox="0 0 8 8"><g transform="translate(4 4)"><path d="M-2.4 -3.4H1L2.6 -1.8V3.4H-2.4Z" fill="#f6f6f6" stroke="#aaa" stroke-width="0.5"/><rect x="-0.6" y="0" width="2" height="2" fill="#666"/></g></svg>
<svg class="b" style="left:203.00px;top:36.20px;" width="8" height="8" viewBox="0 0 8 8"><g transform="translate(4 4)"><path d="M-2.6 2.6L2.6 -2.6" stroke="#888" stroke-width="1.6" stroke-linecap="round"/><path d="M-2.6 2.6L2.6 -2.6" stroke="#eee" stroke-width="0.6"/></g></svg>
<svg class="b" style="left:214.50px;top:36.20px;" width="8" height="8" viewBox="0 0 8 8"><g transform="translate(4 4)"><path d="M-3.2 0H3.2M0 -2.4V-0.8M0 0.8V2.4" stroke="#aaa" stroke-width="0.6"/></g></svg>
<svg class="b" style="left:226.00px;top:36.20px;" width="8" height="8" viewBox="0 0 8 8"><g transform="translate(4 4)"><circle cx="-2.3" cy="-0.5" r="0.95" fill="#444"/><circle cx="2.3" cy="-0.5" r="0.95" fill="#444"/><path d="M-3.4 1.9Q-3.3 0.5 -2 0.5H2Q3.3 0.5 3.4 1.9Z" fill="#444"/><circle cx="0" cy="-1.1" r="1.2" fill="#111"/><path d="M-2.2 2.3Q-2 0.4 0 0.4Q2 0.4 2.2 2.3Z" fill="#111"/></g></svg>
<svg class="b" style="left:110.70px;top:47.40px;" width="8" height="8" viewBox="0 0 8 8"><g transform="translate(4 4)"><circle cx="0" cy="-1.2" r="1.3" fill="#111"/><path d="M-2.6 2.2Q-2.4 0.4 0 0.4Q2.4 0.4 2.6 2.2Z" fill="#111"/></g></svg>
<svg class="b" style="left:122.60px;top:47.40px;" width="8" height="8" viewBox="0 0 8 8"><g transform="translate(4 4)"><rect x="-3" y="-3" width="6" height="6" fill="#333"/><rect x="-2.2" y="-1.6" width="4.4" height="1.2" fill="#ddd"/><rect x="-1.4" y="0.6" width="2.8" height="1.6" fill="#ddd"/></g></svg>
<div class="b" style="left:107.00px;top:126.80px;width:133.00px;height:8.40px;background:#fdfdfd"></div>
<div class="b" style="left:111.20px;top:69.50px;width:0.70px;height:8.80px;background:#d4d4d4"></div>
<div class="b" style="left:111.20px;top:78.30px;width:4.80px;height:0.70px;background:#d4d4d4"></div>
<div class="b" style="left:117.30px;top:81.00px;width:0.70px;height:147.50px;background:#d4d4d4"></div>
<div class="b" style="left:117.30px;top:86.90px;width:4.70px;height:0.70px;background:#d4d4d4"></div>
<div class="b" style="left:117.30px;top:95.75px;width:4.70px;height:0.70px;background:#d4d4d4"></div>
<div class="b" style="left:117.30px;top:104.60px;width:4.70px;height:0.70px;background:#d4d4d4"></div>
<div class="b" style="left:117.30px;top:140.00px;width:4.70px;height:0.70px;background:#d4d4d4"></div>
<div class="b" style="left:117.30px;top:148.85px;width:4.70px;height:0.70px;background:#d4d4d4"></div>
<div class="b" style="left:117.30px;top:157.70px;width:4.70px;height:0.70px;background:#d4d4d4"></div>
<div class="b" style="left:117.30px;top:166.55px;width:4.70px;height:0.70px;background:#d4d4d4"></div>
<div class="b" style="left:117.30px;top:175.40px;width:4.70px;height:0.70px;background:#d4d4d4"></div>
<div class="b" style="left:117.30px;top:184.25px;width:4.70px;height:0.70px;background:#d4d4d4"></div>
<div class="b" style="left:117.30px;top:193.10px;width:4.70px;height:0.70px;background:#d4d4d4"></div>
<div class="b" style="left:117.30px;top:201.95px;width:4.70px;height:0.70px;background:#d4d4d4"></div>
<div class="b" style="left:117.30px;top:210.80px;width:4.70px;height:0.70px;background:#d4d4d4"></div>
<div class="b" style="left:117.30px;top:219.65px;width:4.70px;height:0.70px;background:#d4d4d4"></div>
<div class="b" style="left:117.30px;top:228.50px;width:4.70px;height:0.70px;background:#d4d4d4"></div>
<div class="b" style="left:124.40px;top:107.00px;width:0.70px;height:6.45px;background:#d4d4d4"></div>
<div class="b" style="left:124.40px;top:113.45px;width:5.10px;height:0.70px;background:#d4d4d4"></div>
<div class="b" style="left:131.80px;top:116.00px;width:0.70px;height:15.15px;background:#d4d4d4"></div>
<div class="b" style="left:131.80px;top:122.30px;width:9.20px;height:0.70px;background:#d4d4d4"></div>
<div class="b" style="left:131.80px;top:131.15px;width:9.20px;height:0.70px;background:#d4d4d4"></div>
<svg class="b" style="left:113.50px;top:65.20px;" width="8" height="8" viewBox="0 0 8 8"><g transform="translate(4 4)"><path d="M1.6 -3.6Q-0.8 -3.6 -2.8 -2.6Q-3.2 1.2 0.2 3.6Q1 3.4 1.8 2.6Q-0.8 0.2 -1.2 -2.6Q0.2 -3 1.6 -3.6Z" fill="#444"/><path d="M1.6 -3.4Q2.8 -3.2 2.8 -2.2Q2.8 -1.4 2 -1.2Z" fill="#444"/></g></svg>
<div class="t" style="left:124.00px;top:64.20px;height:10px;line-height:10px;font-size:6.05px;color:#333;font-weight:400;">Demo toujou</div>
<svg class="b" style="left:115.30px;top:76.25px;" width="4.4" height="3.8" viewBox="0 0 4.4 3.8"><path d="M0 0.2H4.4L2.2 3.6Z" fill="#111"/></svg>
<svg class="b" style="left:120.80px;top:74.05px;" width="8" height="8" viewBox="0 0 8 8"><g transform="translate(4 4)"><path d="M-2.9 2.9L-2.5 -1.2Q-2.3 -2.9 -0.9 -2.9H-0.1V-0.6L-0.6 0L-0.1 0.6V2.9Z" fill="#111"/><path d="M0.5 -2.7Q2.4 -2.7 2.5 -0.6V2.3" fill="none" stroke="#777" stroke-width="0.7"/><circle cx="2.5" cy="2.4" r="0.6" fill="#333"/></g></svg>
<div class="t" style="left:131.10px;top:73.05px;height:10px;line-height:10px;font-size:6.05px;color:#3a3a3a;font-weight:400;">Home</div>
<svg class="b" style="left:122.90px;top:84.70px;" width="3.6" height="4.4" viewBox="0 0 3.6 4.4"><path d="M0.2 0L3.4 2.2L0.2 4.4Z" fill="#777"/></svg>
<svg class="b" style="left:127.80px;top:82.90px;" width="8" height="8" viewBox="0 0 8 8"><g transform="translate(4 4)"><path d="M-2.9 2.9L-2.5 -1.2Q-2.3 -2.9 -0.9 -2.9H-0.1V-0.6L-0.6 0L-0.1 0.6V2.9Z" fill="#111"/><path d="M0.5 -2.7Q2.4 -2.7 2.5 -0.6V2.3" fill="none" stroke="#777" stroke-width="0.7"/><circle cx="2.5" cy="2.4" r="0.6" fill="#333"/></g></svg>
<div class="t" style="left:138.10px;top:81.90px;height:10px;line-height:10px;font-size:6.05px;color:#3a3a3a;font-weight:400;">Kanada</div>
<svg class="b" style="left:122.90px;top:93.55px;" width="3.6" height="4.4" viewBox="0 0 3.6 4.4"><path d="M0.2 0L3.4 2.2L0.2 4.4Z" fill="#777"/></svg>
<svg class="b" style="left:127.80px;top:91.75px;" width="8" height="8" viewBox="0 0 8 8"><g transform="translate(4 4)"><path d="M-2.9 2.9L-2.5 -1.2Q-2.3 -2.9 -0.9 -2.9H-0.1V-0.6L-0.6 0L-0.1 0.6V2.9Z" fill="#111"/><path d="M0.5 -2.7Q2.4 -2.7 2.5 -0.6V2.3" fill="none" stroke="#777" stroke-width="0.7"/><circle cx="2.5" cy="2.4" r="0.6" fill="#333"/></g></svg>
<div class="t" style="left:138.10px;top:90.75px;height:10px;line-height:10px;font-size:6.05px;color:#3a3a3a;font-weight:400;">Island</div>
<svg class="b" style="left:122.30px;top:102.80px;" width="4.4" height="3.8" viewBox="0 0 4.4 3.8"><path d="M0 0.2H4.4L2.2 3.6Z" fill="#111"/></svg>
<svg class="b" style="left:127.80px;top:100.60px;" width="8" height="8" viewBox="0 0 8 8"><g transform="translate(4 4)"><path d="M-2.9 2.9L-2.5 -1.2Q-2.3 -2.9 -0.9 -2.9H-0.1V-0.6L-0.6 0L-0.1 0.6V2.9Z" fill="#111"/><path d="M0.5 -2.7Q2.4 -2.7 2.5 -0.6V2.3" fill="none" stroke="#777" stroke-width="0.7"/><circle cx="2.5" cy="2.4" r="0.6" fill="#333"/></g></svg>
<div class="t" style="left:138.10px;top:99.60px;height:10px;line-height:10px;font-size:6.05px;color:#3a3a3a;font-weight:400;">Neuseeland</div>
<svg class="b" style="left:129.30px;top:111.65px;" width="4.4" height="3.8" viewBox="0 0 4.4 3.8"><path d="M0 0.2H4.4L2.2 3.6Z" fill="#111"/></svg>
<svg class="b" style="left:134.80px;top:109.45px;" width="8" height="8" viewBox="0 0 8 8"><g transform="translate(4 4)"><path d="M-3.2 0H3.2M0 -2.4V-0.8M0 0.8V2.4" stroke="#aaa" stroke-width="0.6"/></g></svg>
<div class="t" style="left:145.10px;top:108.45px;height:10px;line-height:10px;font-size:6.05px;color:#3a3a3a;font-weight:400;">Reisetrenner Neuseeland</div>
<svg class="b" style="left:141.80px;top:118.30px;" width="8" height="8" viewBox="0 0 8 8"><g transform="translate(4 4)"><circle cx="-2.3" cy="-0.5" r="0.95" fill="#444"/><circle cx="2.3" cy="-0.5" r="0.95" fill="#444"/><path d="M-3.4 1.9Q-3.3 0.5 -2 0.5H2Q3.3 0.5 3.4 1.9Z" fill="#444"/><circle cx="0" cy="-1.1" r="1.2" fill="#111"/><path d="M-2.2 2.3Q-2 0.4 0 0.4Q2 0.4 2.2 2.3Z" fill="#111"/></g></svg>
<div class="t" style="left:152.10px;top:117.30px;height:10px;line-height:10px;font-size:6.05px;color:#3a3a3a;font-weight:400;">[] Der Ruf der Seelöwen</div>
<svg class="b" style="left:141.80px;top:127.15px;" width="8" height="8" viewBox="0 0 8 8"><g transform="translate(4 4)"><circle cx="-2.3" cy="-0.5" r="0.95" fill="#444"/><circle cx="2.3" cy="-0.5" r="0.95" fill="#444"/><path d="M-3.4 1.9Q-3.3 0.5 -2 0.5H2Q3.3 0.5 3.4 1.9Z" fill="#444"/><circle cx="0" cy="-1.1" r="1.2" fill="#111"/><path d="M-2.2 2.3Q-2 0.4 0 0.4Q2 0.4 2.2 2.3Z" fill="#111"/></g></svg>
<div class="t" style="left:152.10px;top:126.15px;height:10px;line-height:10px;font-size:6.05px;color:#3a3a3a;font-weight:400;">[] Die Welt der Pinguine</div>
<svg class="b" style="left:122.90px;top:137.80px;" width="3.6" height="4.4" viewBox="0 0 3.6 4.4"><path d="M0.2 0L3.4 2.2L0.2 4.4Z" fill="#777"/></svg>
<svg class="b" style="left:127.80px;top:136.00px;" width="8" height="8" viewBox="0 0 8 8"><g transform="translate(4 4)"><path d="M-2.9 2.9L-2.5 -1.2Q-2.3 -2.9 -0.9 -2.9H-0.1V-0.6L-0.6 0L-0.1 0.6V2.9Z" fill="#111"/><path d="M0.5 -2.7Q2.4 -2.7 2.5 -0.6V2.3" fill="none" stroke="#777" stroke-width="0.7"/><circle cx="2.5" cy="2.4" r="0.6" fill="#333"/></g></svg>
<div class="t" style="left:138.10px;top:135.00px;height:10px;line-height:10px;font-size:6.05px;color:#3a3a3a;font-weight:400;">Schottland</div>
<svg class="b" style="left:127.80px;top:144.85px;" width="8" height="8" viewBox="0 0 8 8"><g transform="translate(4 4)"><path d="M-2.9 2.9L-2.5 -1.2Q-2.3 -2.9 -0.9 -2.9H-0.1V-0.6L-0.6 0L-0.1 0.6V2.9Z" fill="#111"/><path d="M0.5 -2.7Q2.4 -2.7 2.5 -0.6V2.3" fill="none" stroke="#777" stroke-width="0.7"/><circle cx="2.5" cy="2.4" r="0.6" fill="#333"/></g></svg>
<div class="t" style="left:138.10px;top:143.85px;height:10px;line-height:10px;font-size:6.05px;color:#3a3a3a;font-weight:400;">Über uns</div>
<svg class="b" style="left:122.90px;top:155.50px;" width="3.6" height="4.4" viewBox="0 0 3.6 4.4"><path d="M0.2 0L3.4 2.2L0.2 4.4Z" fill="#777"/></svg>
<svg class="b" style="left:127.80px;top:153.70px;" width="8" height="8" viewBox="0 0 8 8"><g transform="translate(4 4)"><path d="M-2.9 2.9L-2.5 -1.2Q-2.3 -2.9 -0.9 -2.9H-0.1V-0.6L-0.6 0L-0.1 0.6V2.9Z" fill="#6a6a6a"/><path d="M0.5 -2.7Q2.4 -2.7 2.5 -0.6V2.3" fill="none" stroke="#999" stroke-width="0.7"/><circle cx="2.5" cy="2.4" r="0.6" fill="#666"/></g></svg>
<div class="t" style="left:138.10px;top:152.70px;height:10px;line-height:10px;font-size:6.05px;color:#555;font-weight:400;">Unterkünfte</div>
<svg class="b" style="left:122.90px;top:164.35px;" width="3.6" height="4.4" viewBox="0 0 3.6 4.4"><path d="M0.2 0L3.4 2.2L0.2 4.4Z" fill="#777"/></svg>
<svg class="b" style="left:127.80px;top:162.55px;" width="8" height="8" viewBox="0 0 8 8"><g transform="translate(4 4)"><path d="M-2.9 2.9L-2.5 -1.2Q-2.3 -2.9 -0.9 -2.9H-0.1V-0.6L-0.6 0L-0.1 0.6V2.9Z" fill="#6a6a6a"/><path d="M0.5 -2.7Q2.4 -2.7 2.5 -0.6V2.3" fill="none" stroke="#999" stroke-width="0.7"/><circle cx="2.5" cy="2.4" r="0.6" fill="#666"/></g></svg>
<div class="t" style="left:138.10px;top:161.55px;height:10px;line-height:10px;font-size:6.05px;color:#555;font-weight:400;">Individualreisen</div>
<svg class="b" style="left:127.80px;top:171.40px;" width="8" height="8" viewBox="0 0 8 8"><g transform="translate(4 4)"><path d="M-2.9 2.9L-2.5 -1.2Q-2.3 -2.9 -0.9 -2.9H-0.1V-0.6L-0.6 0L-0.1 0.6V2.9Z" fill="#6a6a6a"/><path d="M0.5 -2.7Q2.4 -2.7 2.5 -0.6V2.3" fill="none" stroke="#999" stroke-width="0.7"/><circle cx="2.5" cy="2.4" r="0.6" fill="#666"/></g></svg>
<div class="t" style="left:138.10px;top:170.40px;height:10px;line-height:10px;font-size:6.05px;color:#555;font-weight:400;">Reisen mit Wildlife Adventures</div>
<svg class="b" style="left:122.90px;top:182.05px;" width="3.6" height="4.4" viewBox="0 0 3.6 4.4"><path d="M0.2 0L3.4 2.2L0.2 4.4Z" fill="#777"/></svg>
<svg class="b" style="left:127.80px;top:180.25px;" width="8" height="8" viewBox="0 0 8 8"><g transform="translate(4 4)"><path d="M-2.9 2.9L-2.5 -1.2Q-2.3 -2.9 -0.9 -2.9H-0.1V-0.6L-0.6 0L-0.1 0.6V2.9Z" fill="#6a6a6a"/><path d="M0.5 -2.7Q2.4 -2.7 2.5 -0.6V2.3" fill="none" stroke="#999" stroke-width="0.7"/><circle cx="2.5" cy="2.4" r="0.6" fill="#666"/></g></svg>
<div class="t" style="left:138.10px;top:179.25px;height:10px;line-height:10px;font-size:6.05px;color:#555;font-weight:400;">Katalogbestellung</div>
<svg class="b" style="left:122.90px;top:190.90px;" width="3.6" height="4.4" viewBox="0 0 3.6 4.4"><path d="M0.2 0L3.4 2.2L0.2 4.4Z" fill="#777"/></svg>
<svg class="b" style="left:127.80px;top:189.10px;" width="8" height="8" viewBox="0 0 8 8"><g transform="translate(4 4)"><path d="M-2.4 -3.4H1L2.6 -1.8V3.4H-2.4Z" fill="#555"/></g></svg>
<div class="t" style="left:138.10px;top:188.10px;height:10px;line-height:10px;font-size:6.05px;color:#555;font-weight:400;">Kontakt</div>
<svg class="b" style="left:122.90px;top:199.75px;" width="3.6" height="4.4" viewBox="0 0 3.6 4.4"><path d="M0.2 0L3.4 2.2L0.2 4.4Z" fill="#777"/></svg>
<svg class="b" style="left:127.80px;top:197.95px;" width="8" height="8" viewBox="0 0 8 8"><g transform="translate(4 4)"><path d="M-2.9 2.9L-2.5 -1.2Q-2.3 -2.9 -0.9 -2.9H-0.1V-0.6L-0.6 0L-0.1 0.6V2.9Z" fill="#6a6a6a"/><path d="M0.5 -2.7Q2.4 -2.7 2.5 -0.6V2.3" fill="none" stroke="#999" stroke-width="0.7"/><circle cx="2.5" cy="2.4" r="0.6" fill="#666"/></g></svg>
<div class="t" style="left:138.10px;top:196.95px;height:10px;line-height:10px;font-size:6.05px;color:#555;font-weight:400;">Blog</div>
<svg class="b" style="left:127.80px;top:206.80px;" width="8" height="8" viewBox="0 0 8 8"><g transform="translate(4 4)"><circle cx="-0.6" cy="-0.6" r="2.2" fill="none" stroke="#333" stroke-width="0.7"/><path d="M1 1L2.8 2.8" stroke="#333" stroke-width="0.8"/></g></svg>
<div class="t" style="left:138.10px;top:205.80px;height:10px;line-height:10px;font-size:6.05px;color:#3a3a3a;font-weight:400;">Suchergebnisse</div>
<svg class="b" style="left:122.90px;top:217.45px;" width="3.6" height="4.4" viewBox="0 0 3.6 4.4"><path d="M0.2 0L3.4 2.2L0.2 4.4Z" fill="#777"/></svg>
<svg class="b" style="left:127.80px;top:215.65px;" width="8" height="8" viewBox="0 0 8 8"><g transform="translate(4 4)"><path d="M-3.4 -2.6H-0.6L0.2 -1.8H3.4V2.6H-3.4Z" fill="#8a8a8a"/><path d="M-3.4 -0.8H3.4" stroke="#bbb" stroke-width="0.4"/></g></svg>
<div class="t" style="left:138.10px;top:214.65px;height:10px;line-height:10px;font-size:6.05px;color:#555;font-weight:400;">Storage Folder</div>
<svg class="b" style="left:122.90px;top:226.30px;" width="3.6" height="4.4" viewBox="0 0 3.6 4.4"><path d="M0.2 0L3.4 2.2L0.2 4.4Z" fill="#777"/></svg>
<svg class="b" style="left:127.80px;top:224.50px;" width="8" height="8" viewBox="0 0 8 8"><g transform="translate(4 4)"><path d="M-3.4 -2.6H-0.6L0.2 -1.8H3.4V2.6H-3.4Z" fill="#8a8a8a"/><path d="M-3.4 -0.8H3.4" stroke="#bbb" stroke-width="0.4"/></g></svg>
<div class="t" style="left:138.10px;top:223.50px;height:10px;line-height:10px;font-size:6.05px;color:#555;font-weight:400;">Service-Navigation</div></div>
<div class="scr" style="left:0;top:0;width:1023px;height:575px"><div class="b" style="left:584.60px;top:277.40px;width:438.40px;height:297.60px;background:#fff"></div>
<div class="b" style="left:595.00px;top:290.00px;width:428.00px;height:24.20px;background:#f9f9f9;border-bottom:0.9px solid #e0e0e0;box-sizing:border-box"></div>
<div class="b" style="left:599.30px;top:299.20px;width:24.90px;height:10.30px;background:#efefef;border:0.9px solid #d9d9d9;border-radius:1.2px;box-sizing:border-box"></div>
<svg class="b" style="left:602.20px;top:302.15px;" width="4.4" height="4.4" viewBox="0 0 4.4 4.4"><path d="M2.2 0.2V4.2M0.2 2.2H4.2" stroke="#222" stroke-width="0.75"/></svg>
<div class="t" style="left:608.90px;top:299.35px;height:10px;line-height:10px;font-size:5.4px;color:#777;font-weight:400;">Inhalt</div>
<div class="b" style="left:595.00px;top:314.20px;width:428.00px;height:18.20px;background:#fff;border-bottom:0.9px solid #e0e0e0;box-sizing:border-box"></div>
<div class="t" style="left:599.20px;top:321.00px;height:10px;line-height:10px;font-size:5.4px;color:#999;font-weight:400;">Reiseverlauf</div>
<div class="b" style="left:595.00px;top:332.40px;width:428.00px;height:242.60px;background:#f9f9f9"></div>
<div class="b" style="left:599.30px;top:336.30px;width:24.90px;height:10.40px;background:#efefef;border:0.9px solid #d9d9d9;border-radius:1.2px;box-sizing:border-box"></div>
<svg class="b" style="left:602.20px;top:339.30px;" width="4.4" height="4.4" viewBox="0 0 4.4 4.4"><path d="M2.2 0.2V4.2M0.2 2.2H4.2" stroke="#222" stroke-width="0.75"/></svg>
<div class="t" style="left:608.90px;top:336.50px;height:10px;line-height:10px;font-size:5.4px;color:#777;font-weight:400;">Inhalt</div>
<div class="b" style="left:599.20px;top:350.90px;width:430.80px;height:38.20px;background:#fff;border:0.9px solid #e0e0e0;border-radius:1px;box-sizing:border-box"></div>
<div class="b" style="left:599.20px;top:350.90px;width:430.80px;height:14.70px;background:#e8e8e8"></div>
<div class="b" style="left:603.40px;top:355.35px;width:6.20px;height:5.60px;background:#ececec;border:0.7px solid #d0d0d0;border-radius:1px;box-sizing:border-box"></div>
<div class="b" style="left:604.60px;top:356.35px;width:3.80px;height:0.60px;background:#aaa"></div>
<svg class="b" style="left:613.00px;top:354.85px;" width="6.3" height="6.8" viewBox="0 0 6.3 6.8"><rect x="0" y="0" width="6.3" height="2.3" fill="#111"/><rect x="0" y="2.27" width="6.3" height="2.27" fill="#dd1010"/><rect x="0" y="4.53" width="6.3" height="2.27" fill="#f7c400"/></svg>
<div class="t" style="left:621.10px;top:353.25px;height:10px;line-height:10px;font-size:5.4px;color:#333;font-weight:400;">Deutsch</div>
<div class="t" style="left:603.90px;top:368.20px;height:10px;line-height:10px;font-size:5.7px;color:#222;font-weight:700;">Reiseverlauf</div>
<div class="t" style="left:603.90px;top:375.60px;height:10px;line-height:10px;font-size:5.7px;color:#222;font-weight:700;">Headline</div>
<div class="b" style="left:599.30px;top:393.10px;width:24.90px;height:9.80px;background:#efefef;border:0.9px solid #d9d9d9;border-radius:1.2px;box-sizing:border-box"></div>
<svg class="b" style="left:602.20px;top:395.80px;" width="4.4" height="4.4" viewBox="0 0 4.4 4.4"><path d="M2.2 0.2V4.2M0.2 2.2H4.2" stroke="#222" stroke-width="0.75"/></svg>
<div class="t" style="left:608.90px;top:393.00px;height:10px;line-height:10px;font-size:5.4px;color:#777;font-weight:400;">Inhalt</div>
<div class="b" style="left:599.20px;top:407.70px;width:430.80px;height:31.30px;background:#fff;border:0.9px solid #e0e0e0;border-radius:1px;box-sizing:border-box"></div>
<div class="b" style="left:599.20px;top:407.70px;width:430.80px;height:14.20px;background:#e8e8e8"></div>
<div class="b" style="left:603.40px;top:411.90px;width:6.20px;height:5.60px;background:#ececec;border:0.7px solid #d0d0d0;border-radius:1px;box-sizing:border-box"></div>
<div class="b" style="left:604.60px;top:412.90px;width:3.80px;height:0.60px;background:#aaa"></div>
<svg class="b" style="left:613.00px;top:411.40px;" width="6.3" height="6.8" viewBox="0 0 6.3 6.8"><rect x="0" y="0" width="6.3" height="2.3" fill="#111"/><rect x="0" y="2.27" width="6.3" height="2.27" fill="#dd1010"/><rect x="0" y="4.53" width="6.3" height="2.27" fill="#f7c400"/></svg>
<div class="t" style="left:621.10px;top:409.80px;height:10px;line-height:10px;font-size:5.4px;color:#333;font-weight:400;">Deutsch</div>
<div class="t" style="left:603.90px;top:425.00px;height:10px;line-height:10px;font-size:5.7px;color:#222;font-weight:700;">Tripdescription</div>
<div class="b" style="left:599.30px;top:442.20px;width:24.90px;height:10.30px;background:#efefef;border:0.9px solid #d9d9d9;border-radius:1.2px;box-sizing:border-box"></div>
<svg class="b" style="left:602.20px;top:445.15px;" width="4.4" height="4.4" viewBox="0 0 4.4 4.4"><path d="M2.2 0.2V4.2M0.2 2.2H4.2" stroke="#222" stroke-width="0.75"/></svg>
<div class="t" style="left:608.90px;top:442.35px;height:10px;line-height:10px;font-size:5.4px;color:#777;font-weight:400;">Inhalt</div>
<div class="b" style="left:599.20px;top:457.00px;width:430.80px;height:31.10px;background:#fff;border:0.9px solid #e0e0e0;border-radius:1px;box-sizing:border-box"></div>
<div class="b" style="left:599.20px;top:457.00px;width:430.80px;height:15.00px;background:#e8e8e8"></div>
<div class="b" style="left:603.40px;top:461.60px;width:6.20px;height:5.60px;background:#ececec;border:0.7px solid #d0d0d0;border-radius:1px;box-sizing:border-box"></div>
<div class="b" style="left:604.60px;top:462.60px;width:3.80px;height:0.60px;background:#aaa"></div>
<svg class="b" style="left:613.00px;top:461.10px;" width="6.3" height="6.8" viewBox="0 0 6.3 6.8"><rect x="0" y="0" width="6.3" height="2.3" fill="#111"/><rect x="0" y="2.27" width="6.3" height="2.27" fill="#dd1010"/><rect x="0" y="4.53" width="6.3" height="2.27" fill="#f7c400"/></svg>
<div class="t" style="left:621.10px;top:459.50px;height:10px;line-height:10px;font-size:5.4px;color:#333;font-weight:400;">Deutsch</div>
<div class="t" style="left:603.90px;top:474.40px;height:10px;line-height:10px;font-size:5.7px;color:#222;font-weight:700;">Tripdescription</div>
<div class="b" style="left:599.30px;top:492.30px;width:24.90px;height:10.30px;background:#efefef;border:0.9px solid #d9d9d9;border-radius:1.2px;box-sizing:border-box"></div>
<svg class="b" style="left:602.20px;top:495.25px;" width="4.4" height="4.4" viewBox="0 0 4.4 4.4"><path d="M2.2 0.2V4.2M0.2 2.2H4.2" stroke="#222" stroke-width="0.75"/></svg>
<div class="t" style="left:608.90px;top:492.45px;height:10px;line-height:10px;font-size:5.4px;color:#777;font-weight:400;">Inhalt</div>
<div class="b" style="left:599.20px;top:506.40px;width:430.80px;height:39.20px;background:#fff;border:0.9px solid #e0e0e0;border-radius:1px;box-sizing:border-box"></div>
<div class="b" style="left:599.20px;top:506.40px;width:430.80px;height:14.60px;background:#e8e8e8"></div>
<div class="b" style="left:603.40px;top:510.80px;width:6.20px;height:5.60px;background:#ececec;border:0.7px solid #d0d0d0;border-radius:1px;box-sizing:border-box"></div>
<div class="b" style="left:604.60px;top:511.80px;width:3.80px;height:0.60px;background:#aaa"></div>
<svg class="b" style="left:613.00px;top:510.30px;" width="6.3" height="6.8" viewBox="0 0 6.3 6.8"><rect x="0" y="0" width="6.3" height="2.3" fill="#111"/><rect x="0" y="2.27" width="6.3" height="2.27" fill="#dd1010"/><rect x="0" y="4.53" width="6.3" height="2.27" fill="#f7c400"/></svg>
<div class="t" style="left:621.10px;top:508.70px;height:10px;line-height:10px;font-size:5.4px;color:#333;font-weight:400;">Deutsch</div>
<div class="t" style="left:603.90px;top:524.20px;height:10px;line-height:10px;font-size:5.7px;color:#222;font-weight:700;">Unterkünfte</div>
<div class="t" style="left:603.90px;top:531.40px;height:10px;line-height:10px;font-size:5.7px;color:#222;font-weight:700;">Headline</div>
<div class="b" style="left:599.30px;top:548.40px;width:24.90px;height:10.30px;background:#efefef;border:0.9px solid #d9d9d9;border-radius:1.2px;box-sizing:border-box"></div>
<svg class="b" style="left:602.20px;top:551.35px;" width="4.4" height="4.4" viewBox="0 0 4.4 4.4"><path d="M2.2 0.2V4.2M0.2 2.2H4.2" stroke="#222" stroke-width="0.75"/></svg>
<div class="t" style="left:608.90px;top:548.55px;height:10px;line-height:10px;font-size:5.4px;color:#777;font-weight:400;">Inhalt</div>
<div class="b" style="left:599.20px;top:562.90px;width:430.80px;height:37.90px;background:#fff;border:0.9px solid #e0e0e0;border-radius:1px;box-sizing:border-box"></div>
<div class="b" style="left:599.20px;top:562.90px;width:430.80px;height:14.50px;background:#e8e8e8"></div>
<div class="b" style="left:603.40px;top:567.25px;width:6.20px;height:5.60px;background:#ececec;border:0.7px solid #d0d0d0;border-radius:1px;box-sizing:border-box"></div>
<div class="b" style="left:604.60px;top:568.25px;width:3.80px;height:0.60px;background:#aaa"></div>
<svg class="b" style="left:613.00px;top:566.75px;" width="6.3" height="6.8" viewBox="0 0 6.3 6.8"><rect x="0" y="0" width="6.3" height="2.3" fill="#111"/><rect x="0" y="2.27" width="6.3" height="2.27" fill="#dd1010"/><rect x="0" y="4.53" width="6.3" height="2.27" fill="#f7c400"/></svg>
<div class="t" style="left:621.10px;top:565.15px;height:10px;line-height:10px;font-size:5.4px;color:#333;font-weight:400;">Deutsch</div>
<div class="b" style="left:585.40px;top:277.40px;width:437.60px;height:26.10px;background:#ededed;border-bottom:0.9px solid #dadada;box-sizing:border-box"></div>
<div class="t" style="left:921.00px;top:279.80px;height:10px;line-height:10px;font-size:5.46px;color:#333;font-weight:400;">Pfad: /Home/Neuseeland/Reisetrenner Neuseeland/</div>
<div class="b" style="left:595.40px;top:291.70px;width:19.80px;height:9.80px;background:#eeeeee;border:0.9px solid #d9d9d9;border-radius:1.2px;box-sizing:border-box"></div>
<div class="b" style="left:605.20px;top:291.90px;width:0.70px;height:9.40px;background:#d9d9d9"></div>
<div class="b" style="left:617.80px;top:291.70px;width:10.60px;height:9.80px;background:#eeeeee;border:0.9px solid #d9d9d9;border-radius:1.2px;box-sizing:border-box"></div>
<div class="b" style="left:630.30px;top:291.70px;width:10.10px;height:9.80px;background:#eeeeee;border:0.9px solid #d9d9d9;border-radius:1.2px;box-sizing:border-box"></div>
<svg class="b" style="left:597.60px;top:293.60px;" width="6" height="6" viewBox="0 0 6 6"><path d="M0.6 0.4H3.2L4.6 1.8V3M2.6 5.6H0.6V0.4" fill="none" stroke="#666" stroke-width="0.55"/><path d="M3 5.6L4.4 3.6L5.6 5.6Z" fill="#222"/></svg>
<svg class="b" style="left:607.60px;top:293.60px;" width="6" height="6" viewBox="0 0 6 6"><path d="M0.6 0.4H3.2L4.6 1.8V2.4M2.2 5.6H0.6V0.4" fill="none" stroke="#666" stroke-width="0.55"/><path d="M2.4 5.4L5.4 2.4" stroke="#222" stroke-width="0.9"/></svg>
<svg class="b" style="left:620.30px;top:293.80px;" width="6" height="6" viewBox="0 0 6 6"><circle cx="2.5" cy="2.5" r="1.9" fill="none" stroke="#333" stroke-width="0.65"/><path d="M3.8 3.8L5.5 5.5" stroke="#333" stroke-width="0.8"/></svg>
<svg class="b" style="left:632.40px;top:293.40px;" width="6.4" height="6.4" viewBox="0 0 6.4 6.4"><path d="M1 0.8L2.6 2.2M1 2.4H2.4M4.6 0.6L3.6 2" stroke="#444" stroke-width="0.5"/><circle cx="3.6" cy="3.8" r="2.1" fill="#5c9e34"/><circle cx="3.6" cy="3.8" r="0.7" fill="#cfe8c0"/></svg>
<div class="b" style="left:594.00px;top:404.00px;width:379.00px;height:87.60px;border:2.2px solid #e2001a;box-sizing:border-box"></div>
</div>
</body></html>
